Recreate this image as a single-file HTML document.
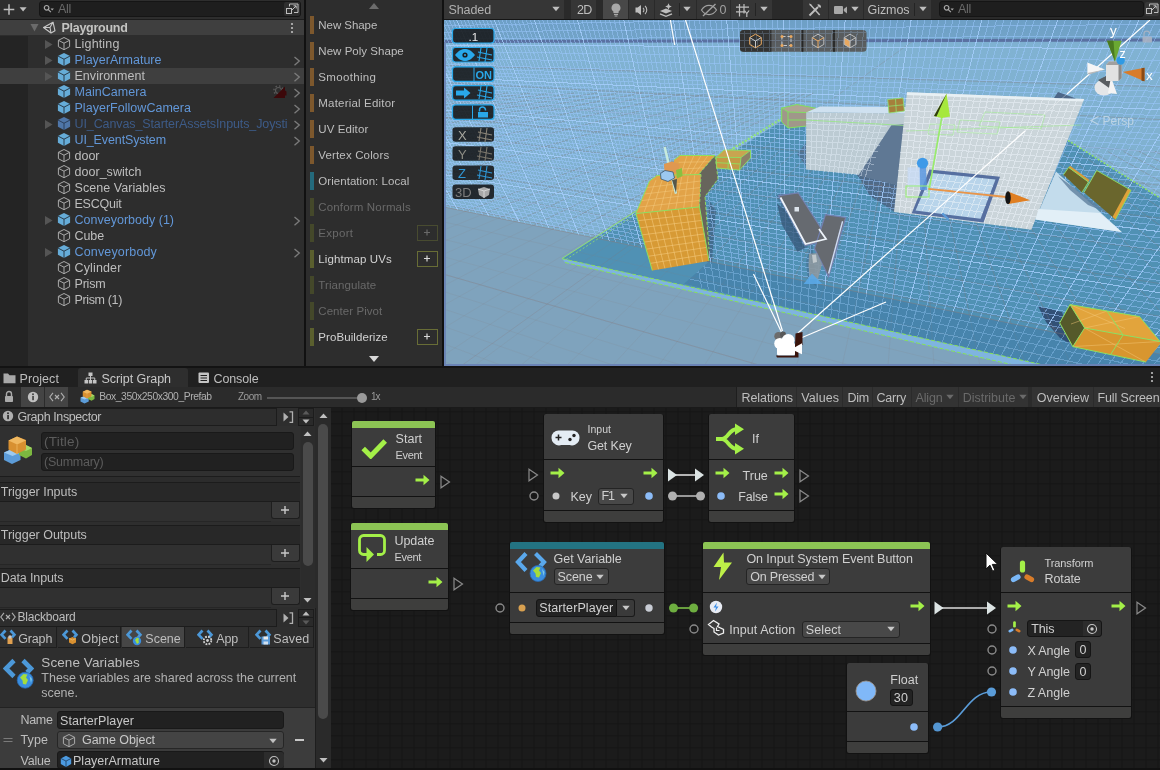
<!DOCTYPE html>
<html lang="en"><head><meta charset="utf-8"><title>Unity Editor - Script Graph</title>
<style>
html,body{margin:0;padding:0;}
body{width:1160px;height:770px;overflow:hidden;background:#111111;position:relative;font-family:"Liberation Sans",sans-serif;}
.a{position:absolute;display:block;box-sizing:border-box;}
.t{white-space:pre;line-height:16px;}
#root{position:absolute;left:0;top:0;width:1160px;height:770px;overflow:hidden;will-change:transform;}
</style></head>
<body>
<div id="root">
<div class="a " style="left:0px;top:0px;width:304px;height:366px;background:#2d2d2d;"></div>
<div class="a " style="left:0px;top:36px;width:28px;height:330px;background:#242424;"></div>
<div class="a " style="left:0px;top:0px;width:304px;height:20px;background:#2e2e2e;border-bottom:1px solid #1c1c1c;"></div>
<svg class="a" style="left:2px;top:2px;" width="26" height="15" viewBox="0 0 26 15"><path d="M7 2.2v10.6M1.7 7.5h10.6" stroke="#bebebe" stroke-width="1.5" fill="none"/><path d="M17.6 5.3h7l-3.5 4.2z" fill="#bebebe"/></svg>
<div class="a " style="left:39px;top:1px;width:262px;height:16px;background:#1e1e1e;border:1px solid #151515;border-radius:3px;"></div>
<svg class="a" style="left:43px;top:4px;" width="12" height="10" viewBox="0 0 12 10"><circle cx="3.6" cy="3.8" r="2.3" stroke="#a8a8a8" stroke-width="1.2" fill="none"/><path d="M5.3 5.6l2.6 2.6" stroke="#a8a8a8" stroke-width="1.2"/><path d="M7.5 4.6h3.4l-1.7 2z" fill="#a8a8a8"/></svg>
<span class="a t" style="left:58px;top:1.44px;font-size:12.5px;color:#6a6a6a;letter-spacing:-0.298px;">All</span>
<div class="a " style="left:284px;top:2px;width:16px;height:14px;background:#2e2e2e;border-radius:2px;"></div>
<svg class="a" style="left:285px;top:2px;" width="15" height="14" viewBox="0 0 15 14"><rect x="1.5" y="6.5" width="5" height="5" fill="none" stroke="#bebebe" stroke-width="1"/><path d="M4.5 4.5v-2.5h8.5v8.5h-4" fill="none" stroke="#bebebe" stroke-width="1"/><path d="M7 8l4-4M8.5 3.8h2.7v2.7" fill="none" stroke="#bebebe" stroke-width="1"/></svg>
<div class="a " style="left:0px;top:20px;width:304px;height:15px;background:#3f3f3f;"></div>
<svg class="a" style="left:30px;top:23px;" width="9" height="9" viewBox="0 0 9 9"><path d="M0.5 1h8l-4 7.5z" fill="#6a6a6a"/></svg>
<svg class="a" style="left:42px;top:20px;" width="15" height="15" viewBox="0 0 15 15"><g fill="none" stroke="#c8c8c8" stroke-width="1.1" stroke-linejoin="round"><path d="M1.5 7.5L11 2.2l2 8.6L9 13z"/><path d="M1.5 7.5h6.5M8 7.5l3-5.3M8 7.5l1 5.5"/></g></svg>
<span class="a t" style="left:61.5px;top:19.84px;font-size:12.5px;color:#c4c4c2;letter-spacing:-0.275px;font-weight:700;">Playground</span>
<svg class="a" style="left:288px;top:22px;" width="8" height="12" viewBox="0 0 8 12"><circle cx="4" cy="2" r="1.1" fill="#bebebe"/><circle cx="4" cy="6" r="1.1" fill="#bebebe"/><circle cx="4" cy="10" r="1.1" fill="#bebebe"/></svg>
<svg class="a" style="left:44px;top:39px;" width="10" height="11" viewBox="0 0 10 11"><path d="M1 1l7.6 4.5L1 10z" fill="#555555"/></svg>
<svg class="a" style="left:57px;top:36px;" width="14" height="16" viewBox="0 0 14 16"><path d="M7 1.5l5.6 2.8v6.4L7 13.7 1.4 10.7V4.3z" fill="none" stroke="#aaaaaa" stroke-width="1" stroke-linejoin="round"/><path d="M1.4 4.3L7 7.2l5.6-2.9M7 7.2v6.5" fill="none" stroke="#aaaaaa" stroke-width="1"/></svg>
<span class="a t" style="left:74.5px;top:35.64px;font-size:12.5px;color:#bebebe;letter-spacing:0.152px;">Lighting</span>
<svg class="a" style="left:44px;top:55px;" width="10" height="11" viewBox="0 0 10 11"><path d="M1 1l7.6 4.5L1 10z" fill="#555555"/></svg>
<svg class="a" style="left:57px;top:52px;" width="14" height="16" viewBox="0 0 14 16"><path d="M7 1l6.1 3v6.7L7 14 0.9 10.7V4z" fill="#66acd8"/><path d="M0.9 4L7 7.2l6.1-3.2M7 7.2v6.8" fill="none" stroke="#22303c" stroke-width="0.9"/></svg>
<span class="a t" style="left:74.5px;top:51.64px;font-size:12.5px;color:#6297d8;letter-spacing:0.012px;">PlayerArmature</span>
<svg class="a" style="left:293px;top:55.5px;" width="8" height="10" viewBox="0 0 8 10"><path d="M1.5 1l4.8 4.1-4.8 4.1" fill="none" stroke="#7c7c7c" stroke-width="1.3"/></svg>
<div class="a " style="left:0px;top:68px;width:304px;height:16px;background:#3f3f3f;"></div>
<svg class="a" style="left:44px;top:71px;" width="10" height="11" viewBox="0 0 10 11"><path d="M1 1l7.6 4.5L1 10z" fill="#555555"/></svg>
<svg class="a" style="left:57px;top:68px;" width="14" height="16" viewBox="0 0 14 16"><path d="M7 1l6.1 3v6.7L7 14 0.9 10.7V4z" fill="#66acd8"/><path d="M0.9 4L7 7.2l6.1-3.2M7 7.2v6.8" fill="none" stroke="#22303c" stroke-width="0.9"/></svg>
<span class="a t" style="left:74.5px;top:67.64px;font-size:12.5px;color:#bebebe;letter-spacing:0.03px;">Environment</span>
<svg class="a" style="left:293px;top:71.5px;" width="8" height="10" viewBox="0 0 8 10"><path d="M1.5 1l4.8 4.1-4.8 4.1" fill="none" stroke="#7c7c7c" stroke-width="1.3"/></svg>
<svg class="a" style="left:57px;top:84px;" width="14" height="16" viewBox="0 0 14 16"><path d="M7 1l6.1 3v6.7L7 14 0.9 10.7V4z" fill="#66acd8"/><path d="M0.9 4L7 7.2l6.1-3.2M7 7.2v6.8" fill="none" stroke="#22303c" stroke-width="0.9"/></svg>
<span class="a t" style="left:74.5px;top:83.64px;font-size:12.5px;color:#6297d8;letter-spacing:0.045px;">MainCamera</span>
<svg class="a" style="left:293px;top:87.5px;" width="8" height="10" viewBox="0 0 8 10"><path d="M1.5 1l4.8 4.1-4.8 4.1" fill="none" stroke="#7c7c7c" stroke-width="1.3"/></svg>
<svg class="a" style="left:57px;top:100px;" width="14" height="16" viewBox="0 0 14 16"><path d="M7 1l6.1 3v6.7L7 14 0.9 10.7V4z" fill="#66acd8"/><path d="M0.9 4L7 7.2l6.1-3.2M7 7.2v6.8" fill="none" stroke="#22303c" stroke-width="0.9"/></svg>
<span class="a t" style="left:74.5px;top:99.64px;font-size:12.5px;color:#6297d8;letter-spacing:0.028px;">PlayerFollowCamera</span>
<svg class="a" style="left:293px;top:103.5px;" width="8" height="10" viewBox="0 0 8 10"><path d="M1.5 1l4.8 4.1-4.8 4.1" fill="none" stroke="#7c7c7c" stroke-width="1.3"/></svg>
<svg class="a" style="left:44px;top:119px;" width="10" height="11" viewBox="0 0 10 11"><path d="M1 1l7.6 4.5L1 10z" fill="#555555"/></svg>
<svg class="a" style="left:57px;top:116px;" width="14" height="16" viewBox="0 0 14 16"><path d="M7 1l6.1 3v6.7L7 14 0.9 10.7V4z" fill="#4f76a8"/><path d="M0.9 4L7 7.2l6.1-3.2M7 7.2v6.8" fill="none" stroke="#283a52" stroke-width="0.9"/></svg>
<span class="a t" style="left:74.5px;top:115.64px;font-size:12.5px;color:#3d5b88;letter-spacing:-0.104px;">UI_Canvas_StarterAssetsInputs_Joysti</span>
<svg class="a" style="left:293px;top:119.5px;" width="8" height="10" viewBox="0 0 8 10"><path d="M1.5 1l4.8 4.1-4.8 4.1" fill="none" stroke="#7c7c7c" stroke-width="1.3"/></svg>
<svg class="a" style="left:57px;top:132px;" width="14" height="16" viewBox="0 0 14 16"><path d="M7 1l6.1 3v6.7L7 14 0.9 10.7V4z" fill="#66acd8"/><path d="M0.9 4L7 7.2l6.1-3.2M7 7.2v6.8" fill="none" stroke="#22303c" stroke-width="0.9"/></svg>
<span class="a t" style="left:74.5px;top:131.64px;font-size:12.5px;color:#6297d8;letter-spacing:-0.113px;">UI_EventSystem</span>
<svg class="a" style="left:293px;top:135.5px;" width="8" height="10" viewBox="0 0 8 10"><path d="M1.5 1l4.8 4.1-4.8 4.1" fill="none" stroke="#7c7c7c" stroke-width="1.3"/></svg>
<svg class="a" style="left:57px;top:148px;" width="14" height="16" viewBox="0 0 14 16"><path d="M7 1.5l5.6 2.8v6.4L7 13.7 1.4 10.7V4.3z" fill="none" stroke="#aaaaaa" stroke-width="1" stroke-linejoin="round"/><path d="M1.4 4.3L7 7.2l5.6-2.9M7 7.2v6.5" fill="none" stroke="#aaaaaa" stroke-width="1"/></svg>
<span class="a t" style="left:74.5px;top:147.64px;font-size:12.5px;color:#bebebe;">door</span>
<svg class="a" style="left:57px;top:164px;" width="14" height="16" viewBox="0 0 14 16"><path d="M7 1.5l5.6 2.8v6.4L7 13.7 1.4 10.7V4.3z" fill="none" stroke="#aaaaaa" stroke-width="1" stroke-linejoin="round"/><path d="M1.4 4.3L7 7.2l5.6-2.9M7 7.2v6.5" fill="none" stroke="#aaaaaa" stroke-width="1"/></svg>
<span class="a t" style="left:74.5px;top:163.64px;font-size:12.5px;color:#bebebe;letter-spacing:0.028px;">door_switch</span>
<svg class="a" style="left:57px;top:180px;" width="14" height="16" viewBox="0 0 14 16"><path d="M7 1.5l5.6 2.8v6.4L7 13.7 1.4 10.7V4.3z" fill="none" stroke="#aaaaaa" stroke-width="1" stroke-linejoin="round"/><path d="M1.4 4.3L7 7.2l5.6-2.9M7 7.2v6.5" fill="none" stroke="#aaaaaa" stroke-width="1"/></svg>
<span class="a t" style="left:74.5px;top:179.64px;font-size:12.5px;color:#bebebe;letter-spacing:0.06px;">Scene Variables</span>
<svg class="a" style="left:57px;top:196px;" width="14" height="16" viewBox="0 0 14 16"><path d="M7 1.5l5.6 2.8v6.4L7 13.7 1.4 10.7V4.3z" fill="none" stroke="#aaaaaa" stroke-width="1" stroke-linejoin="round"/><path d="M1.4 4.3L7 7.2l5.6-2.9M7 7.2v6.5" fill="none" stroke="#aaaaaa" stroke-width="1"/></svg>
<span class="a t" style="left:74.5px;top:195.64px;font-size:12.5px;color:#bebebe;letter-spacing:-0.232px;">ESCQuit</span>
<svg class="a" style="left:44px;top:215px;" width="10" height="11" viewBox="0 0 10 11"><path d="M1 1l7.6 4.5L1 10z" fill="#555555"/></svg>
<svg class="a" style="left:57px;top:212px;" width="14" height="16" viewBox="0 0 14 16"><path d="M7 1l6.1 3v6.7L7 14 0.9 10.7V4z" fill="#66acd8"/><path d="M0.9 4L7 7.2l6.1-3.2M7 7.2v6.8" fill="none" stroke="#22303c" stroke-width="0.9"/></svg>
<span class="a t" style="left:74.5px;top:211.64px;font-size:12.5px;color:#6297d8;letter-spacing:0.01px;">Conveyorbody (1)</span>
<svg class="a" style="left:293px;top:215.5px;" width="8" height="10" viewBox="0 0 8 10"><path d="M1.5 1l4.8 4.1-4.8 4.1" fill="none" stroke="#7c7c7c" stroke-width="1.3"/></svg>
<svg class="a" style="left:57px;top:228px;" width="14" height="16" viewBox="0 0 14 16"><path d="M7 1.5l5.6 2.8v6.4L7 13.7 1.4 10.7V4.3z" fill="none" stroke="#aaaaaa" stroke-width="1" stroke-linejoin="round"/><path d="M1.4 4.3L7 7.2l5.6-2.9M7 7.2v6.5" fill="none" stroke="#aaaaaa" stroke-width="1"/></svg>
<span class="a t" style="left:74.5px;top:227.64px;font-size:12.5px;color:#bebebe;letter-spacing:-0.095px;">Cube</span>
<svg class="a" style="left:44px;top:247px;" width="10" height="11" viewBox="0 0 10 11"><path d="M1 1l7.6 4.5L1 10z" fill="#555555"/></svg>
<svg class="a" style="left:57px;top:244px;" width="14" height="16" viewBox="0 0 14 16"><path d="M7 1l6.1 3v6.7L7 14 0.9 10.7V4z" fill="#66acd8"/><path d="M0.9 4L7 7.2l6.1-3.2M7 7.2v6.8" fill="none" stroke="#22303c" stroke-width="0.9"/></svg>
<span class="a t" style="left:74.5px;top:243.64px;font-size:12.5px;color:#6297d8;letter-spacing:0.159px;">Conveyorbody</span>
<svg class="a" style="left:293px;top:247.5px;" width="8" height="10" viewBox="0 0 8 10"><path d="M1.5 1l4.8 4.1-4.8 4.1" fill="none" stroke="#7c7c7c" stroke-width="1.3"/></svg>
<svg class="a" style="left:57px;top:260px;" width="14" height="16" viewBox="0 0 14 16"><path d="M7 1.5l5.6 2.8v6.4L7 13.7 1.4 10.7V4.3z" fill="none" stroke="#aaaaaa" stroke-width="1" stroke-linejoin="round"/><path d="M1.4 4.3L7 7.2l5.6-2.9M7 7.2v6.5" fill="none" stroke="#aaaaaa" stroke-width="1"/></svg>
<span class="a t" style="left:74.5px;top:259.64px;font-size:12.5px;color:#bebebe;letter-spacing:0.144px;">Cylinder</span>
<svg class="a" style="left:57px;top:276px;" width="14" height="16" viewBox="0 0 14 16"><path d="M7 1.5l5.6 2.8v6.4L7 13.7 1.4 10.7V4.3z" fill="none" stroke="#aaaaaa" stroke-width="1" stroke-linejoin="round"/><path d="M1.4 4.3L7 7.2l5.6-2.9M7 7.2v6.5" fill="none" stroke="#aaaaaa" stroke-width="1"/></svg>
<span class="a t" style="left:74.5px;top:275.64px;font-size:12.5px;color:#bebebe;letter-spacing:-0.188px;">Prism</span>
<svg class="a" style="left:57px;top:292px;" width="14" height="16" viewBox="0 0 14 16"><path d="M7 1.5l5.6 2.8v6.4L7 13.7 1.4 10.7V4.3z" fill="none" stroke="#aaaaaa" stroke-width="1" stroke-linejoin="round"/><path d="M1.4 4.3L7 7.2l5.6-2.9M7 7.2v6.5" fill="none" stroke="#aaaaaa" stroke-width="1"/></svg>
<span class="a t" style="left:74.5px;top:291.64px;font-size:12.5px;color:#bebebe;letter-spacing:-0.354px;">Prism (1)</span>
<svg class="a" style="left:272px;top:84px;" width="17" height="16" viewBox="0 0 17 16"><circle cx="6.5" cy="6.5" r="3" fill="none" stroke="#5a5a5a" stroke-width="1.1"/><circle cx="6.5" cy="6.5" r="4.6" fill="none" stroke="#5a5a5a" stroke-width="1.4" stroke-dasharray="1.5 2.1"/><path d="M13 2.5v4l1.5 1v4h-1.5v2.5h-11.5z" fill="#3c080a"/></svg>
<div class="a " style="left:304px;top:0px;width:2px;height:366px;background:#111111;"></div>
<div class="a " style="left:306px;top:0px;width:136px;height:366px;background:#2d2d2d;"></div>
<svg class="a" style="left:369px;top:2px;" width="10" height="8" viewBox="0 0 10 8"><path d="M5 1l5 6H0z" fill="#6c6c6c"/></svg>
<svg class="a" style="left:369px;top:355px;" width="10" height="8" viewBox="0 0 10 8"><path d="M5 7L0 1h10z" fill="#d8d8d8"/></svg>
<div class="a " style="left:310px;top:16px;width:4px;height:18px;background:#7d582d;"></div>
<span class="a t" style="left:318.3px;top:17.33px;font-size:11.5px;color:#bebebe;letter-spacing:-0.05px;">New Shape</span>
<div class="a " style="left:310px;top:42px;width:4px;height:18px;background:#7d582d;"></div>
<span class="a t" style="left:318.3px;top:43.33px;font-size:11.5px;color:#bebebe;letter-spacing:0.034px;">New Poly Shape</span>
<div class="a " style="left:310px;top:68px;width:4px;height:18px;background:#7d582d;"></div>
<span class="a t" style="left:318.3px;top:69.33px;font-size:11.5px;color:#bebebe;letter-spacing:0.336px;">Smoothing</span>
<div class="a " style="left:310px;top:94px;width:4px;height:18px;background:#7d582d;"></div>
<span class="a t" style="left:318.3px;top:95.33px;font-size:11.5px;color:#bebebe;letter-spacing:0.191px;">Material Editor</span>
<div class="a " style="left:310px;top:120px;width:4px;height:18px;background:#7d582d;"></div>
<span class="a t" style="left:318.3px;top:121.33px;font-size:11.5px;color:#bebebe;letter-spacing:0.088px;">UV Editor</span>
<div class="a " style="left:310px;top:146px;width:4px;height:18px;background:#7d582d;"></div>
<span class="a t" style="left:318.3px;top:147.33px;font-size:11.5px;color:#bebebe;letter-spacing:0.152px;">Vertex Colors</span>
<div class="a " style="left:310px;top:172px;width:4px;height:18px;background:#246a7c;"></div>
<span class="a t" style="left:318.3px;top:173.33px;font-size:11.5px;color:#bebebe;letter-spacing:0.048px;">Orientation: Local</span>
<div class="a " style="left:310px;top:198px;width:4px;height:18px;background:#44482a;"></div>
<span class="a t" style="left:318.3px;top:199.33px;font-size:11.5px;color:#696969;letter-spacing:0.16px;">Conform Normals</span>
<div class="a " style="left:310px;top:224px;width:4px;height:18px;background:#44482a;"></div>
<span class="a t" style="left:318.3px;top:225.33px;font-size:11.5px;color:#696969;letter-spacing:0.294px;">Export</span>
<div class="a " style="left:417px;top:225px;width:20.5px;height:15.5px;background:transparent;border:1px solid #484b30;"></div>
<svg class="a" style="left:417px;top:225px;" width="20" height="15" viewBox="0 0 20 15"><path d="M10 4.5v6M7 7.5h6" stroke="#696969" stroke-width="1.2"/></svg>
<div class="a " style="left:310px;top:250px;width:4px;height:18px;background:#5a5f2e;"></div>
<span class="a t" style="left:318.3px;top:251.33px;font-size:11.5px;color:#d2d2d2;letter-spacing:0.106px;">Lightmap UVs</span>
<div class="a " style="left:417px;top:251px;width:20.5px;height:15.5px;background:transparent;border:1px solid #686d36;"></div>
<svg class="a" style="left:417px;top:251px;" width="20" height="15" viewBox="0 0 20 15"><path d="M10 4.5v6M7 7.5h6" stroke="#d8d8d8" stroke-width="1.2"/></svg>
<div class="a " style="left:310px;top:276px;width:4px;height:18px;background:#44482a;"></div>
<span class="a t" style="left:318.3px;top:277.33px;font-size:11.5px;color:#696969;letter-spacing:0.082px;">Triangulate</span>
<div class="a " style="left:310px;top:302px;width:4px;height:18px;background:#44482a;"></div>
<span class="a t" style="left:318.3px;top:303.33px;font-size:11.5px;color:#696969;letter-spacing:0.06px;">Center Pivot</span>
<div class="a " style="left:310px;top:328px;width:4px;height:18px;background:#5a5f2e;"></div>
<span class="a t" style="left:318.3px;top:329.33px;font-size:11.5px;color:#d2d2d2;letter-spacing:0.085px;">ProBuilderize</span>
<div class="a " style="left:417px;top:329px;width:20.5px;height:15.5px;background:transparent;border:1px solid #686d36;"></div>
<svg class="a" style="left:417px;top:329px;" width="20" height="15" viewBox="0 0 20 15"><path d="M10 4.5v6M7 7.5h6" stroke="#d8d8d8" stroke-width="1.2"/></svg>
<div class="a " style="left:442px;top:0px;width:2px;height:366px;background:#111111;"></div>
<div class="a " style="left:444px;top:0px;width:716px;height:20px;background:#2a2a2a;border-bottom:1px solid #161616;"></div>
<div class="a " style="left:444px;top:0px;width:120px;height:19px;background:#363636;"></div>
<span class="a t" style="left:448.5px;top:1.74px;font-size:12.5px;color:#b0b0b0;letter-spacing:-0.099px;">Shaded</span>
<svg class="a" style="left:552px;top:6px;" width="8" height="6" viewBox="0 0 8 6"><path d="M0.3 0.8h7.4L4 5.2z" fill="#bebebe"/></svg>
<div class="a " style="left:571px;top:0px;width:25px;height:19px;background:#363636;"></div>
<span class="a t" style="left:577px;top:1.74px;font-size:12.5px;color:#bebebe;letter-spacing:-0.739px;">2D</span>
<div class="a " style="left:603px;top:0px;width:25px;height:19px;background:#484848;"></div>
<svg class="a" style="left:609px;top:2px;" width="14" height="16" viewBox="0 0 14 16"><path d="M7 1.5a4.4 4.4 0 0 1 2.6 8v1.6H4.4V9.5A4.4 4.4 0 0 1 7 1.5z" fill="#a8a8a8"/><rect x="5" y="11.8" width="4" height="1.2" fill="#a8a8a8"/><rect x="5.6" y="13.5" width="2.8" height="1" fill="#a8a8a8"/></svg>
<div class="a " style="left:629px;top:0px;width:25px;height:19px;background:#363636;"></div>
<svg class="a" style="left:634px;top:3px;" width="16" height="14" viewBox="0 0 16 14"><path d="M1.5 4.5h2.2L7 2v10L3.7 9.5H1.5z" fill="#bebebe"/><path d="M9 4.8a3 3 0 0 1 0 4.4M11 3a5.4 5.4 0 0 1 0 8" fill="none" stroke="#bebebe" stroke-width="1.1"/></svg>
<div class="a " style="left:655px;top:0px;width:41px;height:19px;background:#363636;"></div>
<svg class="a" style="left:658px;top:2px;" width="20" height="16" viewBox="0 0 20 16"><path d="M2 9l6-2.6L14 9l-6 2.6z" fill="#bebebe"/><path d="M2 11.8l6 2.6 6-2.6" fill="none" stroke="#bebebe" stroke-width="1.3"/><path d="M10.5 1.2l1 2.3 2.3 1-2.3 1-1 2.3-1-2.3-2.3-1 2.3-1z" fill="#bebebe"/></svg>
<div class="a " style="left:679px;top:3px;width:1px;height:13px;background:#242424;"></div>
<svg class="a" style="left:683px;top:6px;" width="9" height="6" viewBox="0 0 9 6"><path d="M0.3 0.8h7.4L4 5.2z" fill="#bebebe"/></svg>
<div class="a " style="left:697px;top:0px;width:33px;height:19px;background:#363636;"></div>
<svg class="a" style="left:700px;top:2px;" width="20" height="16" viewBox="0 0 20 16"><path d="M1.5 8c2.2-3.4 5-4.6 7.5-4.6S14.3 4.6 16.5 8c-2.2 3.4-5 4.6-7.5 4.6S3.7 11.4 1.5 8z" fill="none" stroke="#a0a0a0" stroke-width="1.2"/><path d="M3 14L15.5 2" stroke="#a0a0a0" stroke-width="1.4"/></svg>
<span class="a t" style="left:719.5px;top:1.74px;font-size:12.5px;color:#a0a0a0;">0</span>
<div class="a " style="left:731px;top:0px;width:41px;height:19px;background:#363636;"></div>
<svg class="a" style="left:734px;top:2px;" width="20" height="16" viewBox="0 0 20 16"><path d="M2 5.2h13M2 9.8h9M5.5 2v12.5M10 2v9.5" stroke="#bebebe" stroke-width="1.2" fill="none"/><path d="M10.5 8.5l2.3 3 2.3-3M12.8 11.5v3.5" stroke="#bebebe" stroke-width="1.2" fill="none"/></svg>
<div class="a " style="left:755px;top:3px;width:1px;height:13px;background:#242424;"></div>
<svg class="a" style="left:759.5px;top:6px;" width="9" height="6" viewBox="0 0 9 6"><path d="M0.3 0.8h7.4L4 5.2z" fill="#bebebe"/></svg>
<div class="a " style="left:803px;top:0px;width:25px;height:19px;background:#363636;"></div>
<svg class="a" style="left:807px;top:2px;" width="17" height="16" viewBox="0 0 17 16"><path d="M2.5 13.5l8.5-8.5" stroke="#bebebe" stroke-width="2"/><path d="M10.5 2.2a3 3 0 0 1 3.5 3.5l-2-0.5-1-1z" fill="#bebebe"/><path d="M3.2 2.5l9.5 10.5" stroke="#bebebe" stroke-width="1.5"/><path d="M2 1.5l2.5 0.7-1.5 1.6z" fill="#bebebe"/></svg>
<div class="a " style="left:829px;top:0px;width:34px;height:19px;background:#363636;"></div>
<svg class="a" style="left:833px;top:4px;" width="16" height="12" viewBox="0 0 16 12"><rect x="1" y="2" width="9" height="8" rx="1" fill="#a8a8a8"/><path d="M10.8 5l3.2-2.4v6.8L10.8 7z" fill="#a8a8a8"/></svg>
<svg class="a" style="left:851px;top:6px;" width="9" height="6" viewBox="0 0 9 6"><path d="M0.3 0.8h7.4L4 5.2z" fill="#bebebe"/></svg>
<div class="a " style="left:864px;top:0px;width:67px;height:19px;background:#363636;"></div>
<span class="a t" style="left:867.5px;top:1.74px;font-size:12.5px;color:#bebebe;letter-spacing:-0.061px;">Gizmos</span>
<div class="a " style="left:914px;top:3px;width:1px;height:13px;background:#242424;"></div>
<svg class="a" style="left:919px;top:6px;" width="9" height="6" viewBox="0 0 9 6"><path d="M0.3 0.8h7.4L4 5.2z" fill="#bebebe"/></svg>
<div class="a " style="left:939px;top:1px;width:205px;height:16px;background:#1e1e1e;border:1px solid #151515;border-radius:3px;"></div>
<svg class="a" style="left:943px;top:4px;" width="12" height="10" viewBox="0 0 12 10"><circle cx="3.6" cy="3.8" r="2.3" stroke="#a8a8a8" stroke-width="1.2" fill="none"/><path d="M5.3 5.6l2.6 2.6" stroke="#a8a8a8" stroke-width="1.2"/><path d="M7.5 4.6h3.4l-1.7 2z" fill="#a8a8a8"/></svg>
<span class="a t" style="left:958px;top:1.44px;font-size:12.5px;color:#6a6a6a;letter-spacing:-0.298px;">All</span>
<div class="a " style="left:1145px;top:2px;width:14px;height:14px;background:#383838;border-radius:2px;"></div>
<svg class="a" style="left:1145px;top:2px;" width="15" height="14" viewBox="0 0 15 14"><rect x="1.5" y="6.5" width="5" height="5" fill="none" stroke="#bebebe" stroke-width="1"/><path d="M4.5 4.5v-2.5h8.5v8.5h-4" fill="none" stroke="#bebebe" stroke-width="1"/><path d="M7 8l4-4M8.5 3.8h2.7v2.7" fill="none" stroke="#bebebe" stroke-width="1"/></svg>
<svg class="a" style="left:444px;top:20px;" width="716" height="346" viewBox="444 20 716 346"><defs><linearGradient id="sky" x1="0" y1="0" x2="0" y2="1"><stop offset="0" stop-color="#76a8ce"/><stop offset="0.08" stop-color="#80b2d2"/><stop offset="1" stop-color="#80b0cc"/></linearGradient><clipPath id="gp2"><polygon points="709,261.4 1160,354 1160,366 1048,366 684,283.8"/></clipPath></defs><rect x="444" y="20" width="716" height="346" fill="url(#sky)"/><polygon points="444,207 1160,354 1160,366 444,366" fill="#7fa3bd"/><polygon points="562,258.6 782,121 1068,140.4 1160,198 1160,366 1048,366" fill="#5091b4"/><polygon points="709,261.4 1160,354 1160,366 1048,366 684,283.8" fill="#4784ac"/><polygon points="806,143 797,154 806,166" fill="#4f7596"/><polygon points="884.7,121 906,119 894.5,212 856.6,174.7" fill="#4f6a88"/><polygon points="856,172 894.5,212 870,196" fill="#4a6a8a"/><polygon points="1038,306 1062,312 1074,346 1060,338 1046,322" fill="#2f4a70" opacity="0.9"/><polygon points="709,200 716,210 712,262 707,262" fill="#3f6486" opacity="0.8"/><polygon points="776,196 782,192 808,247 803,250" fill="#3f6486" opacity="0.55"/><polygon points="806,262 812,240 816,286 808,280" fill="#3f6486" opacity="0.5"/><defs><clipPath id="sc"><rect x="444" y="20" width="716" height="346"/></clipPath></defs><defs><clipPath id="ab"><polygon points="444,20 1160,20 1160,354 444,207"/></clipPath></defs><g clip-path="url(#ab)"><path d="M350.9 93L-2600 366M373.3 93L-2460 366M395.7 93L-2320 366M418.1 93L-2180 366M440.5 93L-2040 366M462.9 93L-1900 366M485.3 93L-1760 366M507.7 93L-1620 366M530.1 93L-1480 366M552.5 93L-1340 366M574.9 93L-1200 366M597.3 93L-1060 366M619.7 93L-920 366M642.1 93L-780 366M664.5 93L-640 366M686.9 93L-500 366M709.3 93L-360 366M731.7 93L-220 366M754.1 93L-80 366M776.5 93L60 366M783.9 93L106 366M791.2 93L152 366M798.6 93L198 366M806 93L244 366M813.3 93L290 366M716.8 151.5L336 366M732.5 151.5L382 366M748.1 151.5L428 366M763.7 151.5L474 366M779.4 151.5L520 366M795 151.5L566 366M810.7 151.5L612 366M826.3 151.5L658 366M841.9 151.5L704 366M857.6 151.5L750 366M873.2 151.5L796 366M888.9 151.5L842 366M904.5 151.5L888 366M920.1 151.5L934 366M935.8 151.5L980 366M951.4 151.5L1026 366M967.1 151.5L1072 366M982.7 151.5L1118 366M998.3 151.5L1164 366M1014 151.5L1210 366M1029.6 151.5L1256 366M1045.3 151.5L1302 366M1060.9 151.5L1348 366M1076.5 151.5L1394 366M1092.2 151.5L1440 366M1107.8 151.5L1486 366M1123.5 151.5L1532 366M1139.1 151.5L1578 366M1154.7 151.5L1624 366M1170.4 151.5L1670 366M1186 151.5L1716 366M1201.7 151.5L1762 366M1217.3 151.5L1808 366M1232.9 151.5L1854 366M444 65.3L1160 86.8M444 82.7L1160 119.6M444 100.1L1160 152.4M444 117.5L1160 185.2M444 135L1160 218M444 152.4L1160 250.8M444 169.8L1160 283.6M444 187.2L1160 316.4M444 204.6L1160 349.3M444 222L1160 382.1M444 239.4L1160 414.9M444 256.9L1160 447.7M444 274.3L1160 480.5M444 291.7L1160 513.3M444 309.1L1160 546.1M444 326.5L1160 578.9M444 343.9L1160 611.7M444 361.4L1160 644.5M444 378.8L1160 677.3M444 396.2L1160 710.2M444 413.6L1160 743M444 431L1160 775.8M444 448.4L1160 808.6M444 465.8L1160 841.4M444 483.3L1160 874.2" fill="none" stroke="#84706c" stroke-width="1" opacity="0.2"/></g><g clip-path="url(#sc)"><path d="M350.9 93L-2600 366M373.3 93L-2460 366M395.7 93L-2320 366M418.1 93L-2180 366M440.5 93L-2040 366M462.9 93L-1900 366M485.3 93L-1760 366M507.7 93L-1620 366M530.1 93L-1480 366M552.5 93L-1340 366M574.9 93L-1200 366M597.3 93L-1060 366M619.7 93L-920 366M642.1 93L-780 366M664.5 93L-640 366M686.9 93L-500 366M709.3 93L-360 366M731.7 93L-220 366M754.1 93L-80 366M776.5 93L60 366M783.9 93L106 366M791.2 93L152 366M798.6 93L198 366M806 93L244 366M813.3 93L290 366M716.8 151.5L336 366M732.5 151.5L382 366M748.1 151.5L428 366M763.7 151.5L474 366M779.4 151.5L520 366M795 151.5L566 366M810.7 151.5L612 366M826.3 151.5L658 366M841.9 151.5L704 366M857.6 151.5L750 366M873.2 151.5L796 366M888.9 151.5L842 366M904.5 151.5L888 366M920.1 151.5L934 366M935.8 151.5L980 366M951.4 151.5L1026 366M967.1 151.5L1072 366M982.7 151.5L1118 366M998.3 151.5L1164 366M1014 151.5L1210 366M1029.6 151.5L1256 366M1045.3 151.5L1302 366M1060.9 151.5L1348 366M1076.5 151.5L1394 366M1092.2 151.5L1440 366M1107.8 151.5L1486 366M1123.5 151.5L1532 366M1139.1 151.5L1578 366M1154.7 151.5L1624 366M1170.4 151.5L1670 366M1186 151.5L1716 366M1201.7 151.5L1762 366M1217.3 151.5L1808 366M1232.9 151.5L1854 366M444 65.3L1160 86.8M444 82.7L1160 119.6M444 100.1L1160 152.4M444 117.5L1160 185.2M444 135L1160 218M444 152.4L1160 250.8M444 169.8L1160 283.6M444 187.2L1160 316.4M444 204.6L1160 349.3M444 222L1160 382.1M444 239.4L1160 414.9M444 256.9L1160 447.7M444 274.3L1160 480.5M444 291.7L1160 513.3M444 309.1L1160 546.1M444 326.5L1160 578.9M444 343.9L1160 611.7M444 361.4L1160 644.5M444 378.8L1160 677.3M444 396.2L1160 710.2M444 413.6L1160 743M444 431L1160 775.8M444 448.4L1160 808.6M444 465.8L1160 841.4M444 483.3L1160 874.2" fill="none" stroke="#8a7c7c" stroke-width="1" opacity="0.14"/><path d="M913 41L461 366M444 274.3 L1160 480.5" fill="none" stroke="#8a7470" stroke-width="1" opacity="0.22"/></g><polygon points="444,20 1160,20 1160,39 444,40.5" fill="#5f90b8" opacity="0.35"/><polygon points="444,40 1160,38.6 1160,41.6 444,43" fill="#566a9c" opacity="0.9"/><path d="M444 205.3L445.2 207.2M444 196L451.5 208.5M444 176.5L464.1 211.1M444 166.3L470.4 212.4M444 155.7L476.6 213.7M444 144.7L482.8 214.9M444 121.5L495.1 217.5M444 109.2L501.2 218.7M444 96.4L507.3 220M444 83.2L513.3 221.2M444 55.1L525.4 223.7M444 40.2L531.3 224.9M444 24.6L537.3 226.1M449.3 20L543.2 227.3M464.1 20L555 229.7M471.5 20L560.8 230.9M479 20L566.7 232.1M486.6 20L572.6 233.4M502.1 20L584.6 235.8M510 20L590.7 237.1M518 20L596.9 238.3M526.2 20L603.1 239.6M542.8 20L615.7 242.2M551.3 20L622.1 243.5M559.9 20L628.6 244.8M568.6 20L635.1 246.2M586.5 20L648.3 248.9M595.6 20L655 250.3M604.9 20L661.7 251.6M614.2 20L668.5 253M633.4 20L682.3 255.9M643.2 20L689.3 257.3M653.1 20L696.4 258.7M663.2 20L703.5 260.2M683.7 20L717.9 263.1M694.2 20L725.1 264.6M704.9 20L732.5 266.1M715.7 20L739.9 267.7M737.8 20L754.9 270.7M749 20L762.5 272.3M760.5 20L770.1 273.9M772.1 20L777.8 275.4M795.8 20L793.4 278.6M807.9 20L801.3 280.2M820.1 20L809.3 281.9M832.6 20L817.3 283.5M858 20L833.5 286.8M871 20L841.6 288.5M884.2 20L849.9 290.2M897.5 20L858.2 291.9M924.8 20L875 295.3M938.8 20L883.4 297.1M952.9 20L892 298.8M967.2 20L900.6 300.6M996.5 20L917.9 304.1M1011.5 20L926.7 305.9M1026.7 20L935.5 307.8M1042.1 20L944.3 309.6M1073.5 20L962.3 313.2M1089.5 20L971.3 315.1M1105.8 20L980.4 317M1122.4 20L989.5 318.8M1156.1 20L1008 322.6M1160 46L1017.3 324.5M1160 77.5L1026.6 326.4M1160 106.8L1036 328.4M1160 159.5L1055 332.3M1160 183.3L1064.6 334.2M1160 205.6L1074.2 336.2M1160 226.6L1083.8 338.2M1160 264.9L1103.3 342.2M1160 282.5L1113.1 344.2M1160 299.1L1122.9 346.2M1160 314.9L1132.8 348.2M1160 343.9L1152.7 352.3M444 203.8L1160 347.7M444 200.6L1160 341.6M444 197.3L1160 335.5M444 194.1L1160 329.4M444 190.8L1160 323.3M444 187.6L1160 317.2M444 184.4L1160 311.1M444 181.1L1160 305M444 177.9L1160 298.9M444 171.4L1160 286.7M444 168.2L1160 280.6M444 164.9L1160 274.5M444 161.7L1160 268.4M444 158.4L1160 262.3M444 155.2L1160 256.2M444 152L1160 250.1M444 148.7L1160 244M444 145.5L1160 237.9M444 139L1160 225.6M444 135.8L1160 219.5M444 132.5L1160 213.4M444 129.3L1160 207.3M444 126L1160 201.2M444 122.8L1160 195.1M444 119.6L1160 189M444 116.3L1160 182.9M444 113.1L1160 176.8M444 106.6L1160 164.6M444 103.4L1160 158.5M444 100.1L1160 152.4M444 96.9L1160 146.3M444 93.6L1160 140.2M444 90.4L1160 134.1M444 87.2L1160 128M444 83.9L1160 121.9M444 80.7L1160 115.8M444 74.2L1160 103.6M444 71L1160 97.5M444 67.7L1160 91.4M444 64.5L1160 85.3M444 58L1160 73M444 51.5L1160 60.8M444 38.6L1160 36.4M444 32.1L1160 24.2M444 25.6L739.3 20" fill="none" stroke="#9cc8ff" stroke-width="1" opacity="0.5" shape-rendering="crispEdges"/><defs><linearGradient id="lodg" gradientUnits="userSpaceOnUse" x1="0" y1="150" x2="0" y2="235"><stop offset="0" stop-color="#fff"/><stop offset="1" stop-color="#000"/></linearGradient><mask id="lod" maskUnits="userSpaceOnUse" x="444" y="20" width="716" height="346"><rect x="444" y="20" width="716" height="346" fill="url(#lodg)"/></mask></defs><g mask="url(#lod)"><path d="M444 200.7L448.3 207.9M444 191.3L454.7 209.2M444 181.5L461 210.5M444 171.5L467.2 211.8M444 161L473.5 213M444 150.2L479.7 214.3M444 139L485.9 215.6M444 127.4L492 216.8M444 115.4L498.1 218.1M444 102.9L504.2 219.3M444 89.9L510.3 220.6M444 76.4L516.3 221.8M444 62.3L522.4 223.1M444 47.7L528.3 224.3M444 32.4L534.3 225.5M445.6 20L540.2 226.7M453 20L546.2 227.9M460.4 20L552 229.1M467.8 20L557.9 230.3M475.2 20L563.7 231.5M482.8 20L569.6 232.8M490.4 20L575.6 234M498.2 20L581.6 235.2M506 20L587.7 236.5M514 20L593.8 237.7M522.1 20L600 239M530.3 20L606.3 240.3M538.6 20L612.6 241.6M547 20L618.9 242.9M555.6 20L625.3 244.2M564.3 20L631.8 245.5M573.1 20L638.4 246.8M582 20L645 248.2M591 20L651.6 249.6M600.2 20L658.3 250.9M609.5 20L665.1 252.3M619 20L672 253.7M628.6 20L678.9 255.1M638.3 20L685.8 256.6M648.1 20L692.8 258M658.1 20L699.9 259.5M668.3 20L707 260.9M678.5 20L714.2 262.4M689 20L721.5 263.9M699.5 20L728.8 265.4M710.3 20L736.2 266.9M721.2 20L743.6 268.4M732.2 20L751.1 270M743.4 20L758.7 271.5M754.7 20L766.3 273.1M766.3 20L774 274.6M777.9 20L781.7 276.2M789.8 20L789.5 277.8M801.8 20L797.4 279.4M814 20L805.3 281.1M826.3 20L813.3 282.7M838.9 20L821.3 284.3M851.6 20L829.4 286M864.5 20L837.5 287.7M877.6 20L845.8 289.4M890.8 20L854 291.1M904.3 20L862.4 292.8M917.9 20L870.7 294.5M931.8 20L879.2 296.2M945.8 20L887.7 298M960 20L896.3 299.7M974.5 20L904.9 301.5M989.1 20L913.5 303.3M1004 20L922.3 305M1019 20L931.1 306.8M1034.3 20L939.9 308.7M1049.8 20L948.8 310.5M1065.5 20L957.8 312.3M1081.5 20L966.8 314.2M1097.7 20L975.8 316M1114.1 20L985 317.9M1130.7 20L994.1 319.8M1147.6 20L1003.3 321.7M1160 29.4L1012.6 323.6M1160 62.1L1022 325.5M1160 92.4L1031.3 327.4M1160 120.6L1040.8 329.3M1160 147L1050.2 331.3M1160 171.6L1059.8 333.2M1160 194.6L1069.4 335.2M1160 216.3L1079 337.2M1160 236.6L1088.7 339.2M1160 255.8L1098.4 341.2M1160 273.9L1108.2 343.2M1160 290.9L1118 345.2M1160 307.1L1127.9 347.2M1160 322.4L1137.8 349.2M1160 336.9L1147.7 351.3M1160 350.7L1157.7 353.3" fill="none" stroke="#9cc8ff" stroke-width="1" opacity="0.5" shape-rendering="crispEdges"/></g><path d="M444 186.5L457.8 209.8M444 133.3L488.9 216.2M444 69.4L519.4 222.4M456.7 20L549.1 228.5M494.3 20L578.6 234.6M534.4 20L609.4 240.9M577.5 20L641.7 247.5M623.7 20L675.4 254.4M673.4 20L710.6 261.7M726.7 20L747.4 269.2M783.8 20L785.6 277M845.2 20L825.3 285.2M911.1 20L866.5 293.6M981.8 20L909.2 302.4M1057.7 20L953.3 311.4M1139.1 20L998.7 320.7M1160 134L1045.5 330.3M1160 246.3L1093.5 340.2M1160 329.8L1142.7 350.2M444 174.6L1160 292.8M444 142.2L1160 231.7M444 109.8L1160 170.7M444 77.4L1160 109.7M444 45L1160 48.6" fill="none" stroke="#a8d0ff" stroke-width="1" opacity="0.8" shape-rendering="crispEdges"/><g clip-path="url(#gp2)"><path d="M696.4 258.7L703.6 298.7M703.5 260.2L710.2 300.2M710.6 261.7L716.8 301.7M717.9 263.1L723.5 303.1M725.1 264.6L730.2 304.6M732.5 266.1L737 306.1M739.9 267.7L743.8 307.7M747.4 269.2L750.7 309.2M754.9 270.7L757.6 310.7M762.5 272.3L764.6 312.3M770.1 273.9L771.7 313.9M777.8 275.4L778.7 315.4M785.6 277L785.9 317M793.4 278.6L793.1 318.6M801.3 280.2L800.3 320.2M809.3 281.9L807.6 321.9M817.3 283.5L814.9 323.5M825.3 285.2L822.3 325.2M833.5 286.8L829.8 326.8M841.6 288.5L837.3 328.5M849.9 290.2L844.8 330.2M858.2 291.9L852.4 331.9M866.5 293.6L860 333.6M875 295.3L867.7 335.3M883.4 297.1L875.4 337.1M892 298.8L883.2 338.8M900.6 300.6L891 340.6M909.2 302.4L898.9 342.4M917.9 304.1L906.8 344.1M926.7 305.9L914.8 345.9M935.5 307.8L922.8 347.8M944.3 309.6L930.9 349.6M953.3 311.4L938.9 351.4M962.3 313.2L947.1 353.2M971.3 315.1L955.3 355.1M980.4 317L963.5 357M989.5 318.8L971.8 358.8M998.7 320.7L980.1 360.7M1008 322.6L988.4 362.6M1017.3 324.5L996.8 364.5M1026.6 326.4L1005.2 366.4M1036 328.4L1013.7 368.4M1045.5 330.3L1022.2 370.3M1055 332.3L1030.7 372.3M1064.6 334.2L1039.3 374.2M1074.2 336.2L1047.9 376.2M1083.8 338.2L1056.5 378.2M1093.5 340.2L1065.2 380.2M1103.3 342.2L1073.9 382.2M1113.1 344.2L1082.6 384.2M1122.9 346.2L1091.4 386.2M1132.8 348.2L1100.2 388.2M1142.7 350.2L1109 390.2M1152.7 352.3L1117.9 392.3M1162.7 354.3L1126.8 394.3M684 262.6L1160 361.8M684 269.8L1160 370.8M684 277.8L1160 380.8" fill="none" stroke="#8cc0f0" stroke-width="1" opacity="0.45" shape-rendering="crispEdges"/></g><line x1="444" y1="207" x2="1160" y2="354" stroke="#8a7a78" stroke-width="1" opacity="0.45"/><polygon points="562,258.6 1048,366 1016,366 565,262.5" fill="#7fb4e0"/><line x1="562" y1="258.6" x2="1048" y2="366" stroke="#86e05a" stroke-width="1" stroke-dasharray="4 2"/><line x1="565" y1="262.5" x2="1018" y2="366" stroke="#86e05a" stroke-width="1" stroke-dasharray="4 2"/><line x1="562" y1="258.6" x2="733" y2="148.5" stroke="#8fe070" stroke-width="1"/><line x1="566" y1="259.5" x2="736" y2="149.5" stroke="#8fe070" stroke-width="0.8" stroke-dasharray="2 2"/><line x1="733" y1="148.5" x2="782" y2="118.5" stroke="#92e47a" stroke-width="2.2" stroke-dasharray="2 1.5"/><line x1="1068" y1="140.4" x2="1160" y2="198" stroke="#8fe070" stroke-width="1.6" stroke-dasharray="2 1.5"/><polygon points="781.7,108 797,104.5 817,108.5 806.7,112.5 806.7,126 788,128 781.7,122" fill="#a0978a"/><polygon points="781.7,108 797,104.5 817,108.5 806.7,112.5 788,112" fill="#b0a594"/><path d="M781.7 108l15.3-3.5 20 4-10.3 4-18.7-0.5zM781.7 108v14l6.3 6 18.7-2M788 112v16M788 120h18" fill="none" stroke="#7fe060" stroke-width="1"/><polygon points="806.5,112.3 820,106.5 907,107 905,113.5" fill="#cfe1f0"/><polygon points="806.2,112.3 905,113.5 900,185 857,174.6 806,169.4" fill="#bccbd3"/><polygon points="891.4,125.3 906.4,124 899.9,186 858.3,175.5" fill="#5f7894"/><path d="M812.3 112.4L810.6 169.9M818.3 112.5L815.1 170.5M824.4 112.6L819.7 171M830.4 112.6L824.3 171.6M836.5 112.7L828.9 172.1M842.5 112.8L833.4 172.7M848.6 112.9L838 173.2M854.7 113L842.6 173.7M860.7 113.1L847.1 174.3M866.8 113.2L851.7 174.8M872.8 113.2L856.3 175.4M878.9 113.3L860.9 175.9M884.9 113.4L865.4 176.5M806.2 118L888.9 119.8M806.2 123.7L886.8 126.2M806.1 129.4L884.7 132.6M806.1 135.1L882.6 138.9M806.1 140.8L880.5 145.2M806.1 146.6L878.4 151.6M806.1 152.3L876.3 157.9M806 158L874.2 164.3M806 163.7L872.1 170.7" fill="none" stroke="#e8f2ff" stroke-width="1" opacity="0.4" shape-rendering="crispEdges"/><line x1="806" y1="120" x2="905" y2="125.5" stroke="#98e884" stroke-width="1" opacity="0.8"/><polygon points="887.7,99.5 903,98 904.4,111 889,113" fill="#a5803c"/><path d="M887.7 99.5l15.3-1.5 1.4 13-15.4 2zM895.5 98.8l0.8 13.5M888.3 106.3l15.5-1.5" fill="none" stroke="#8fe070" stroke-width="0.8"/><polygon points="907,92.3 1084.2,99 1031.3,229.8 894,212" fill="#cbd5da"/><path d="M913.8 92.6L899.3 212.7M920.6 92.8L904.6 213.4M927.4 93.1L909.8 214.1M934.3 93.3L915.1 214.7M941.1 93.6L920.4 215.4M947.9 93.8L925.7 216.1M954.7 94.1L931 216.8M961.5 94.4L936.2 217.5M968.3 94.6L941.5 218.2M975.2 94.9L946.8 218.8M982 95.1L952.1 219.5M988.8 95.4L957.4 220.2M995.6 95.7L962.6 220.9M1002.4 95.9L967.9 221.6M1009.2 96.2L973.2 222.3M1016 96.4L978.5 223M1022.9 96.7L983.8 223.6M1029.7 96.9L989.1 224.3M1036.5 97.2L994.3 225M1043.3 97.5L999.6 225.7M1050.1 97.7L1004.9 226.4M1056.9 98L1010.2 227.1M1063.8 98.2L1015.5 227.7M1070.6 98.5L1020.7 228.4M1077.4 98.7L1026 229.1M906.4 98.3L1081.6 105.5M905.7 104.3L1078.9 112.1M905 110.3L1076.3 118.6M904.4 116.2L1073.6 125.2M903.8 122.2L1071 131.7M903.1 128.2L1068.3 138.2M902.5 134.2L1065.7 144.8M901.8 140.2L1063 151.3M901.1 146.2L1060.4 157.9M900.5 152.2L1057.8 164.4M899.9 158.1L1055.1 170.9M899.2 164.1L1052.5 177.5M898.5 170.1L1049.8 184M897.9 176.1L1047.2 190.6M897.2 182.1L1044.5 197.1M896.6 188.1L1041.9 203.6M896 194L1039.2 210.2M895.3 200L1036.6 216.7M894.6 206L1033.9 223.3" fill="none" stroke="#f4f8ff" stroke-width="1" opacity="0.45" shape-rendering="crispEdges"/><polygon points="907,92.3 1084.2,99 1083,101.5 906.7,95" fill="#e8f0f4"/><polygon points="1054,98 1058,92 1076,98.5" fill="#4d6788"/><polygon points="911.7,213.2 929.4,169.5 1000,176.8 983.5,222.5" fill="#566fa0"/><polygon points="915.5,210.5 932,173 995.5,179.5 980.5,218.8" fill="#b8d4ea"/><path d="M918.2 204.2L983 212.2M921 198L985.5 205.7M923.8 191.8L988 199.2M926.5 185.5L990.5 192.6M929.2 179.2L993 186.1M922 211.3L938.4 173.7M928.5 212.2L944.7 174.3M935 213L951 174.9M941.5 213.8L957.4 175.6M948 214.7L963.8 176.2M954.5 215.5L970.1 176.9M961 216.3L976.5 177.6M967.5 217.1L982.8 178.2M974 218L989.1 178.8" fill="none" stroke="#ffffff" stroke-width="1" opacity="0.4" shape-rendering="crispEdges"/><polygon points="1056,171.6 1121.7,231.9 1035.4,219.4" fill="#c3dcec"/><polygon points="1038.5,209 1100,213 1121.7,231.9 1035.4,219.4" fill="#e2eff7"/><polygon points="1058,176 1108,213 1088,205 1070,190" fill="#5f7f9e" opacity="0.8"/><polygon points="1063.5,174.7 1068.6,167.4 1088.4,182 1082,192.4" fill="#67632c"/><polygon points="1084,192.4 1096.7,170.5 1131,190.3 1115.4,219.4 1109,214" fill="#6a662d"/><polygon points="1131,190.3 1115.4,219.4 1112.5,217 1128,188.5" fill="#e0a23a"/><polygon points="1068.6,167.4 1088.4,182 1089.5,180 1070,165.8" fill="#d89a38"/><path d="M1063.5 174.7l5.1-7.3 19.8 14.6-6.4 10.4M1084 192.4l12.7-21.9 34.3 19.8-15.6 29.1" fill="none" stroke="#8fe060" stroke-width="0.9"/><polygon points="635.9,213.6 649.5,181 657,175.5 674,175 674,160 680,155.5 715,155.5 699,174 701,174.5 699.5,206.9" fill="#e2a348"/><polygon points="635.9,213.6 699.5,206.9 709,260.9 652.3,270.5" fill="#d79a35"/><polygon points="715,155.5 716,157.3 718,179 705,196.4 709.5,249 709,261 699.5,207 701,174.5 699,174" fill="#67655c"/><path d="M643 212.9L658.6 269.4M650 212.1L664.9 268.4M657.1 211.4L671.2 267.3M664.2 210.6L677.5 266.2M671.2 209.9L683.8 265.2M678.3 209.1L690.1 264.1M685.4 208.4L696.4 263M692.4 207.6L702.7 262M637.9 220.7L700.7 213.7M640 227.8L701.9 220.4M642 234.9L703.1 227.2M644.1 242.1L704.2 233.9M646.1 249.2L705.4 240.6M648.2 256.3L706.6 247.4M650.2 263.4L707.8 254.1" fill="none" stroke="#f6cc80" stroke-width="1" opacity="0.55"/><path d="M655.9 180.2L643.9 212.8M662.4 179.4L651.8 211.9M668.8 178.6L659.8 211.1M675.2 177.8L667.7 210.2M681.7 176.9L675.6 209.4M688.1 176.1L683.6 208.6M694.6 175.3L691.5 207.7M646.8 187.5L700.7 181M644.1 194L700.4 187.5M641.3 200.6L700.1 193.9M638.6 207.1L699.8 200.4" fill="none" stroke="#f6cc80" stroke-width="1" opacity="0.5"/><path d="M687 155.5L680.6 175.6M694 155.5L685.2 175.2M701 155.5L689.8 174.8M708 155.5L694.4 174.4M678.7 162.3L709.7 161.7M677.3 169.2L704.3 167.8" fill="none" stroke="#f6cc80" stroke-width="1" opacity="0.5"/><path d="M635.9 213.6l63.6-6.7 9.5 54M635.9 213.6l16.4 56.9M635.9 213.6l13.6-32.6 7.5-5.5M674 160l6-4.5h35M657 175.5l44-1" fill="none" stroke="#8fe060" stroke-width="1"/><path d="M699.5 207l1.5-32.5-2-0.5 16-18.5 3 23.5-13 17.4 4 52.6" fill="none" stroke="#8fe060" stroke-width="0.9" stroke-dasharray="3 2"/><polygon points="716,157.3 724,150 750.5,150.5 741,157.5" fill="#c9a450"/><polygon points="716,157.3 741,157.5 739.5,170 716.8,168" fill="#c39a45"/><polygon points="741,157.5 750.5,150.5 750.5,158 739.5,170" fill="#8a8068"/><path d="M716 157.3l8-7.3 26.5 0.5-9.5 7zM716 157.3l0.8 10.7 22.7 2 11-12v-7.5M741 157.5l-1.5 12.5M728.5 157.4l-0.5 11.6M716.4 162.6l24 1.4" fill="none" stroke="#8fe060" stroke-width="0.9"/><line x1="664.6" y1="147" x2="676" y2="193.6" stroke="#c8ebdc" stroke-width="2.4"/><polygon points="664,164 672,161.5 679.5,164 679,172 671,174 664.5,172" fill="#e09850"/><polygon points="676,170 682,168 682.5,176 677,178.5" fill="#8ac040"/><polygon points="660.5,173.5 665,170.5 673,172 674.5,178 668,181.5 661,179" fill="#9cc8f0"/><path d="M660.5 173.5l4.5-3 8 1.5 1.5 6-6.5 3.5-7-2.5z" fill="none" stroke="#2a4a6a" stroke-width="0.7"/><polygon points="672,180 677,179 676,193" fill="#55564a"/><polygon points="777,203.4 785,210 805,248 797.4,251.7 782,225" fill="#37597a" opacity="0.8"/><polygon points="778.7,195.6 798.2,192.8 828.6,240 805.2,245.5" fill="#666a70" stroke="#7380b0" stroke-width="1.2"/><polygon points="814.5,248.6 825.5,214.6 845.7,217.4 828.6,276.6" fill="#666a70" stroke="#7380b0" stroke-width="1.2"/><path d="M780.5 197.5l25 46.5 20.5-5l-7-10" fill="none" stroke="#eef4fa" stroke-width="1.8"/><path d="M842.6 221.3l-14 52.2" fill="none" stroke="#d0dcf4" stroke-width="1.4"/><rect x="794.5" y="207" width="4.5" height="4.5" fill="#dce4ec"/><polygon points="809,254 817,253 822,264 818,279 810,279 808.5,266" fill="#8c98a0" opacity="0.9"/><polygon points="812,255 816,254.5 817,262 813,263" fill="#c0c8cc"/><polygon points="803.6,284 812,273.5 822.3,284" fill="#5aa8e8" opacity="0.9"/><circle cx="922.5" cy="163.3" r="5.6" fill="#3f9ae8"/><polygon points="919,168 926,168 927,190 920,190" fill="#5a98e0" opacity="0.85"/><polygon points="907.6,167.4 920,167.4 920,187 907.6,187" fill="#c8dcf8" opacity="0.7"/><rect x="906" y="186" width="23" height="11" fill="none" stroke="#98f070" stroke-width="1"/><path d="M906 131l175 -6M985 112l60 3-4 14-62-3zM960 120l40 2-3 12-40-2zM930 124l25 1-2 10-25-1z" fill="none" stroke="#98ee80" stroke-width="0.8" opacity="0.6"/><line x1="942" y1="116" x2="929.4" y2="188.2" stroke="#98ec6a" stroke-width="1.6"/><polygon points="946.6,93.8 950,116.5 942,118 934,116" fill="#a6e83c"/><polygon points="946.6,93.8 934,116 936.5,116.5" fill="#2f3a10"/><line x1="928.4" y1="188.8" x2="1006.3" y2="197" stroke="#e8954a" stroke-width="1.8"/><polygon points="1008,191.5 1030.2,200.3 1008.5,204" fill="#e07f22"/><ellipse cx="1008" cy="197.7" rx="2.8" ry="6.4" fill="#141414"/><path d="M943 214l5 5" fill="none" stroke="#5a9ad8" stroke-width="2.4" stroke-linecap="round"/><polygon points="1059.7,322.8 1070,304.6 1084.6,328 1072.8,346.6" fill="#55592a"/><polygon points="1070,304.6 1139.5,316.6 1160,341.5 1084.6,328" fill="#e2a43c"/><polygon points="1084.6,328 1160,341.5 1160,344 1146,362 1072.8,346.6" fill="#d8962f"/><path d="M1070 304.6l55 24M1139.5 316.6l-55 11.4M1084.6 328l61 34M1160 341.5l-87.2 5.1M1107 311l-36 13" fill="none" stroke="#f4c878" stroke-width="0.8" opacity="0.6"/><path d="M1059.7 322.8l10.3-18.2 69.5 12 20.5 24.9M1070 304.6l14.6 23.4 75.4 13.5M1084.6 328l-11.8 18.6 72.9 15.4M1059.7 322.8l13.1 23.8M1107 311l16 24-12 19" fill="none" stroke="#8fe060" stroke-width="1"/><path d="M670.4 20L674.7 45M685.5 20L782.5 331M753.5 274L781.4 332M798 333L1025 131M1067 94L1150 20" fill="none" stroke="#ffffff" stroke-width="1.2"/><path d="M1067 94L1025 131" fill="none" stroke="#ffffff" stroke-width="1" opacity="0.35"/><path d="M798 339.3L886 302" fill="none" stroke="#ffffff" stroke-width="1.2"/><g><path d="M795.5 333.5l7 -1.5v13l-4 0.5v12h-21.5l-1-2h19v-9.5z" fill="#3a140c"/><circle cx="778.5" cy="336.3" r="4.2" fill="#6c6c6c"/><circle cx="783" cy="334.5" r="3" fill="#585858"/><circle cx="779.8" cy="343.5" r="5.6" fill="#ffffff"/><circle cx="788.2" cy="340.2" r="6.3" fill="#ffffff"/><rect x="777" y="343" width="18" height="12.3" rx="1.5" fill="#ffffff"/><path d="M794.5 347.5l7.5-4.3v11l-7.5-3.5z" fill="#ffffff"/></g><g><ellipse cx="1104" cy="87.6" rx="9.5" ry="8" fill="#e4e6e8"/><path d="M1098 80l14-7v17z" fill="#5a5e62"/><path d="M1111 77l6 17-9-1z" fill="#f4f4f4"/><path d="M1087.4 62.5l17.6 7-17.6 4.5z" fill="#f6f6f6"/><path d="M1087.4 73l17.6-3.5-16 5z" fill="#b8b8b8"/><path d="M1106 65l3-3.5h11l1.7 2.5v14l-3.2 3h-12.5z" fill="#e2e2e2"/><path d="M1106 65l3-3.5h11l1.7 2.5-3.2 1z" fill="#a0a0a0"/><path d="M1118.5 65l3.2-1v14l-3.2 3z" fill="#8a8a8a"/><circle cx="1120.6" cy="60.5" r="4.2" fill="#2f9ae4"/><path d="M1107 40.8h14.7l-6.7 21z" fill="#6aa832"/><path d="M1107 40.8l8 21-1.5-21z" fill="#4a7a20"/><path d="M1122.7 72l21.8-4.2v13.5z" fill="#d87c2a"/><path d="M1144.5 67.8v13.5l-3-0.5v-12.5z" fill="#8a4a14"/></g><text x="1110" y="35" font-size="13.5" fill="#ffffff" font-family="Liberation Sans, sans-serif">y</text><text x="1119.5" y="57.5" font-size="12.5" fill="#ffffff" font-family="Liberation Sans, sans-serif">z</text><text x="1146" y="79.5" font-size="13.5" fill="#ffffff" font-family="Liberation Sans, sans-serif">x</text><path d="M1144 36v-2a2.8 2.8 0 0 1 5.6 0" fill="none" stroke="#aab4c4" stroke-width="1.2" opacity="0.9"/><rect x="1142.5" y="36.5" width="9.5" height="6" rx="1" fill="#aab4c4" opacity="0.9"/><path d="M1098.5 116.5l-7.5 4 7.5 4" fill="none" stroke="#c0d6e6" stroke-width="1.1" opacity="0.95"/><text x="1102.5" y="125.2" font-size="12" fill="#c0d6e6" opacity="0.95" font-family="Liberation Sans, sans-serif">Persp</text><rect x="740" y="30" width="126.5" height="21.7" rx="3.5" fill="#565656" opacity="0.93"/><path d="M743.5 30h28v21.7h-28a3.5 3.5 0 0 1-3.5-3.5v-14.7a3.5 3.5 0 0 1 3.5-3.5z" fill="#303030" opacity="0.95"/><path d="M802.5 30v21.7M834 30v21.7" stroke="#262626" stroke-width="1.8"/><path d="M744 30.5l1.3 21M750.3 30.5l1.1 21M756.6 30.5l0.9 21M762.9 30.5l0.8 21M769.2 30.5l0.6 21M775.5 30.5l0.4 21M781.8 30.5l0.2 21M788.1 30.5l0 21M794.4 30.5l-0.2 21M800.7 30.5l-0.3 21M807 30.5l-0.5 21M813.3 30.5l-0.7 21M819.6 30.5l-0.9 21M825.9 30.5l-1.1 21M832.2 30.5l-1.3 21M838.5 30.5l-1.4 21M844.8 30.5l-1.6 21M851.1 30.5l-1.8 21M857.4 30.5l-2 21M863.7 30.5l-2.2 21M740.5 33.3L866 32.9M740.5 40.6L866 40.2M740.5 47.7L866 47.3" fill="none" stroke="#a8d0ff" stroke-width="1" opacity="0.22" shape-rendering="crispEdges"/><path d="M755.5 34.2l5.8 3.4v6.8L755.5 47.8l-5.8-3.4v-6.8z" fill="none" stroke="#e8a860" stroke-width="1"/><path d="M749.7 37.6L755.5 41l5.8-3.4M755.5 41v6.8" fill="none" stroke="#c4c8cc" stroke-width="1"/><rect x="782" y="36.5" width="9" height="9" fill="none" stroke="#c4c8cc" stroke-width="1" stroke-dasharray="3.5 2"/><circle cx="782" cy="36.5" r="1.5" fill="#e8a860"/><circle cx="782" cy="45.5" r="1.5" fill="#e8a860"/><circle cx="791" cy="36.5" r="1.5" fill="#e8a860"/><circle cx="791" cy="45.5" r="1.5" fill="#e8a860"/><path d="M818 34.2l5.8 3.4v6.8L818 47.8l-5.8-3.4v-6.8z" fill="none" stroke="#bcbcbc" stroke-width="1"/><path d="M812.2 37.6L818 41l5.8-3.4M818 41v6.8" fill="none" stroke="#e8a860" stroke-width="1"/><path d="M844.2 37.7L850 41v6.8l-5.8-3.3z" fill="#e8a860"/><path d="M850 34.2l5.8 3.4v6.8L850 47.8l-5.8-3.4v-6.8z" fill="none" stroke="#bcbcbc" stroke-width="1"/><path d="M844.2 37.6L850 41l5.8-3.4M850 41v6.8" fill="none" stroke="#bcbcbc" stroke-width="1"/><rect x="452.5" y="28.5" width="41.5" height="14.5" rx="3" fill="#17191c" fill-opacity="0.9" stroke="#29a8ea" stroke-width="1.2"/><text x="468.5" y="40.5" font-size="11.5" fill="#e8e8e8" font-family="Liberation Sans, sans-serif">.1</text><rect x="452.5" y="47.5" width="41.5" height="14.5" rx="3" fill="#17191c" fill-opacity="0.9" stroke="#29a8ea" stroke-width="1.2"/><path d="M455 55c3.5-4.5 7-6 10-6s6.5 1.5 10 6c-3.5 4.5-7 6-10 6s-6.5-1.5-10-6z" fill="#29a8ea"/><circle cx="465" cy="55" r="2.6" fill="#1b1d20"/><circle cx="465" cy="55" r="1" fill="#29a8ea"/><path d="M478 52l14 3M477 57l15 3M481 48l-2 13M487 48l-2 14" fill="none" stroke="#29a8ea" stroke-width="1.1"/><rect x="452.5" y="66.8" width="41.5" height="14.5" rx="3" fill="#17191c" fill-opacity="0.9" stroke="#29a8ea" stroke-width="1.2"/><path d="M474 67.5v13.5" stroke="#29a8ea" stroke-width="1"/><text x="475.5" y="78.7" font-size="11" font-weight="700" fill="#29a8ea" font-family="Liberation Sans, sans-serif">ON</text><rect x="452.5" y="85.7" width="41.5" height="14.5" rx="3" fill="#17191c" fill-opacity="0.9" stroke="#29a8ea" stroke-width="1.2"/><path d="M456 90.5h8v-3l6.5 5.5-6.5 5.5v-3h-8z" fill="#29a8ea"/><path d="M478 90l14 3M477 95l15 3M481 86l-2 13M487 86l-2 14" fill="none" stroke="#29a8ea" stroke-width="1.1"/><rect x="452.5" y="104.8" width="41.5" height="14.5" rx="3" fill="#17191c" fill-opacity="0.9" stroke="#29a8ea" stroke-width="1.2"/><path d="M472.5 105.5v13.5" stroke="#29a8ea" stroke-width="1"/><path d="M479.5 111.5v-1.5a3 3 0 0 1 6 0v0.5" fill="none" stroke="#29a8ea" stroke-width="1.5"/><rect x="478" y="112" width="10" height="5.5" fill="#29a8ea"/><rect x="452.5" y="127.2" width="41.5" height="14.5" rx="3" fill="#17191c" fill-opacity="0.9"/><text x="458" y="140" font-size="13" fill="#a8a8a0" font-family="Liberation Sans, sans-serif">X</text><path d="M478 132l14 3M477 137l15 3M481 128l-2 13M487 128l-2 14" fill="none" stroke="#8a8478" stroke-width="1.1"/><rect x="452.5" y="146.3" width="41.5" height="14.5" rx="3" fill="#17191c" fill-opacity="0.9"/><text x="458" y="159" font-size="13" fill="#8c8c84" font-family="Liberation Sans, sans-serif">Y</text><path d="M478 151l14 3M477 156l15 3M481 147l-2 13M487 147l-2 14" fill="none" stroke="#7a766c" stroke-width="1.1"/><rect x="452.5" y="165.4" width="41.5" height="14.5" rx="3" fill="#17191c" fill-opacity="0.9"/><text x="458" y="178" font-size="13" fill="#2f96d4" font-family="Liberation Sans, sans-serif">Z</text><path d="M478 170l14 3M477 175l15 3M481 166l-2 13M487 166l-2 14" fill="none" stroke="#2f96d4" stroke-width="1.1"/><rect x="452.5" y="184.5" width="41.5" height="14.5" rx="3" fill="#17191c" fill-opacity="0.9"/><text x="455" y="197" font-size="13" fill="#7c7c7c" font-family="Liberation Sans, sans-serif">3D</text><path d="M478 189l6-2 6 2-1 6-5 3-5-3z" fill="#a8a8a8"/><path d="M478 189l6 2 6-2M484 191v7" fill="none" stroke="#e0e0e0" stroke-width="0.8"/><rect x="444" y="42" width="2" height="324" fill="#6982b4" opacity="0.9"/><rect x="444" y="364" width="716" height="2" fill="#6982b4" opacity="0.95"/></svg>
<div class="a " style="left:0px;top:366px;width:1160px;height:2px;background:#131313;"></div>
<div class="a " style="left:0px;top:368px;width:1160px;height:19px;background:#202020;"></div>
<svg class="a" style="left:3px;top:372px;" width="13" height="12" viewBox="0 0 13 12"><path d="M0.5 1.5h4.5l1.5 1.8h6v8h-12z" fill="#a8a8a8"/></svg>
<span class="a t" style="left:19.5px;top:370.84px;font-size:12.5px;color:#bebebe;letter-spacing:0.085px;">Project</span>
<div class="a " style="left:78px;top:368px;width:110px;height:19px;background:#2e2e2e;border-radius:3px 3px 0 0;"></div>
<svg class="a" style="left:84px;top:372px;" width="13" height="12" viewBox="0 0 13 12"><path d="M4.5 0.5h4v3.5h-4zM0.5 8h3.5v3.5h-3.5zM4.75 8h3.5v3.5h-3.5zM9 8h3.5v3.5h-3.5z" fill="#c4c4c4"/><path d="M6.5 4v2M2.25 8v-2h8.5v2M6.5 6v2" fill="none" stroke="#c4c4c4" stroke-width="1"/></svg>
<span class="a t" style="left:101.5px;top:370.84px;font-size:12.5px;color:#c8c8c8;letter-spacing:-0.055px;">Script Graph</span>
<svg class="a" style="left:198px;top:372px;" width="12" height="12" viewBox="0 0 12 12"><rect x="0.5" y="0.5" width="10.5" height="10.5" rx="1" fill="#c4c4c4"/><path d="M2.5 3.5h6.5M2.5 6h6.5M2.5 8.5h6.5" stroke="#1e1e1e" stroke-width="1.1"/></svg>
<span class="a t" style="left:213.5px;top:370.84px;font-size:12.5px;color:#bebebe;letter-spacing:-0.123px;">Console</span>
<svg class="a" style="left:1148px;top:371px;" width="8" height="12" viewBox="0 0 8 12"><circle cx="4" cy="2" r="1.1" fill="#bebebe"/><circle cx="4" cy="6" r="1.1" fill="#bebebe"/><circle cx="4" cy="10" r="1.1" fill="#bebebe"/></svg>
<div class="a " style="left:0px;top:387px;width:1160px;height:20px;background:#2b2b2b;"></div>
<div class="a " style="left:0px;top:407px;width:1160px;height:1px;background:#1a1a1a;"></div>
<svg class="a" style="left:4px;top:390px;" width="10" height="14" viewBox="0 0 10 14"><path d="M2.5 6v-2a2.5 2.5 0 0 1 5 0v2" fill="none" stroke="#aaaaaa" stroke-width="1.4"/><rect x="1" y="6" width="8" height="6" rx="0.8" fill="#aaaaaa"/></svg>
<div class="a " style="left:21px;top:387px;width:23px;height:20px;background:#444444;"></div>
<svg class="a" style="left:27px;top:391px;" width="12" height="12" viewBox="0 0 12 12"><circle cx="6" cy="6" r="5.2" fill="#c0c0c0"/><rect x="5.2" y="5" width="1.7" height="4.2" fill="#444"/><circle cx="6" cy="3.2" r="1" fill="#444"/></svg>
<div class="a " style="left:45px;top:387px;width:23px;height:20px;background:#444444;"></div>
<svg class="a" style="left:49px;top:392px;" width="16" height="10" viewBox="0 0 16 10"><path d="M4 0.8L0.8 5 4 9.2M12 0.8L15.2 5 12 9.2M6 3l4 4M10 3l-4 4" fill="none" stroke="#b0b0b0" stroke-width="1.1"/></svg>
<svg class="a" style="left:80px;top:389px;" width="15" height="15" viewBox="0 0 30 30"><path d="M1 17.5l8-3.5 8.5 3.5v7.5l-8.5 4-8-4z" fill="#5c9cd8"/><path d="M1 17.5l8.5 3.5 8-3.5-8.5-3.5z" fill="#9ccaf0"/><path d="M16 13l7-3 6 3v7l-6 3.5-7-3.5z" fill="#7cb840"/><path d="M16 13l7 3 6-3-6-3z" fill="#a8d868"/><path d="M5.5 5.5l8.5-4 9 3.5v9.5l-9 4.5-8.5-4.5z" fill="#d89030"/><path d="M5.5 5.5l8.5 4 9-4-9-4z" fill="#f0b860"/><path d="M14 9.5v9.5" stroke="#f0b860" stroke-width="0.8"/></svg>
<span class="a t" style="left:99.3px;top:389.02px;font-size:10.3px;color:#b0b0b0;letter-spacing:-0.414px;">Box_350x250x300_Prefab</span>
<span class="a t" style="left:238px;top:389.11px;font-size:10px;color:#9a9a9a;letter-spacing:-0.515px;">Zoom</span>
<div class="a " style="left:267px;top:397.3px;width:93px;height:2px;background:#555555;"></div>
<div class="a " style="left:357px;top:392.5px;width:10px;height:10px;background:#9a9a9a;border-radius:5px;"></div>
<span class="a t" style="left:371px;top:389.11px;font-size:10px;color:#9a9a9a;letter-spacing:-1.03px;">1x</span>
<div class="a " style="left:737px;top:387px;width:59px;height:20px;background:#333333;"></div>
<span class="a t" style="left:741.5px;top:389.74px;font-size:12.5px;color:#bebebe;letter-spacing:-0.068px;">Relations</span>
<div class="a " style="left:797px;top:387px;width:45px;height:20px;background:#333333;"></div>
<span class="a t" style="left:801.2px;top:389.74px;font-size:12.5px;color:#bebebe;letter-spacing:0.118px;">Values</span>
<div class="a " style="left:843px;top:387px;width:29px;height:20px;background:#333333;"></div>
<span class="a t" style="left:847.5px;top:389.74px;font-size:12.5px;color:#bebebe;letter-spacing:-0.239px;">Dim</span>
<div class="a " style="left:873px;top:387px;width:38px;height:20px;background:#333333;"></div>
<span class="a t" style="left:876.5px;top:389.74px;font-size:12.5px;color:#bebebe;letter-spacing:-0.211px;">Carry</span>
<div class="a " style="left:912px;top:387px;width:46px;height:20px;background:#333333;"></div>
<span class="a t" style="left:915.5px;top:389.74px;font-size:12.5px;color:#6a6a6a;letter-spacing:-0.159px;">Align</span>
<svg class="a" style="left:946px;top:394px;" width="9" height="6" viewBox="0 0 9 6"><path d="M0.3 0.8h7.4L4 5.2z" fill="#6a6a6a"/></svg>
<div class="a " style="left:959px;top:387px;width:69px;height:20px;background:#333333;"></div>
<span class="a t" style="left:962.8px;top:389.74px;font-size:12.5px;color:#6a6a6a;letter-spacing:-0.029px;">Distribute</span>
<svg class="a" style="left:1018.5px;top:394px;" width="9" height="6" viewBox="0 0 9 6"><path d="M0.3 0.8h7.4L4 5.2z" fill="#6a6a6a"/></svg>
<div class="a " style="left:1032px;top:387px;width:61px;height:20px;background:#333333;"></div>
<span class="a t" style="left:1036.8px;top:389.74px;font-size:12.5px;color:#bebebe;letter-spacing:0.014px;">Overview</span>
<div class="a " style="left:1094px;top:387px;width:66px;height:20px;background:#333333;"></div>
<span class="a t" style="left:1097.5px;top:389.74px;font-size:12.5px;color:#bebebe;letter-spacing:-0.111px;">Full Screen</span>
<div class="a " style="left:736px;top:387px;width:1px;height:20px;background:#1e1e1e;"></div>
<div class="a " style="left:0px;top:408px;width:331px;height:362px;background:#2e2e2e;"></div>
<div class="a " style="left:0px;top:408px;width:277px;height:18px;background:#2d2d2d;border:1px solid #1c1c1c;border-left:none;"></div>
<svg class="a" style="left:2px;top:410px;" width="12" height="12" viewBox="0 0 12 12"><circle cx="6" cy="6" r="5.2" fill="#b0b0b0"/><rect x="5.2" y="5" width="1.7" height="4.2" fill="#2d2d2d"/><circle cx="6" cy="3.2" r="1" fill="#2d2d2d"/></svg>
<span class="a t" style="left:17.5px;top:408.54px;font-size:12.5px;color:#bebebe;letter-spacing:-0.408px;">Graph Inspector</span>
<svg class="a" style="left:283px;top:411px;" width="11" height="12" viewBox="0 0 11 12"><path d="M0.5 1.5l5 4.5-5 4.5z" fill="#b0b0b0"/><path d="M6.5 0.8h3v10.5h-3" fill="none" stroke="#b0b0b0" stroke-width="1.3"/></svg>
<div class="a " style="left:298px;top:408px;width:16px;height:18px;background:#2a2a2a;border:1px solid #1c1c1c;"></div>
<svg class="a" style="left:302px;top:410px;" width="8" height="5" viewBox="0 0 8 5"><path d="M4 0.5l3.5 4h-7z" fill="#5a5a5a"/></svg>
<svg class="a" style="left:302px;top:419px;" width="8" height="5" viewBox="0 0 8 5"><path d="M4 4.5l3.5-4h-7z" fill="#c0c0c0"/></svg>
<div class="a " style="left:299px;top:416.5px;width:14px;height:1px;background:#1c1c1c;"></div>
<div class="a " style="left:0px;top:426px;width:300px;height:50px;background:#303030;"></div>
<svg class="a" style="left:3px;top:434.5px;" width="30" height="30" viewBox="0 0 30 30"><path d="M1 17.5l8-3.5 8.5 3.5v7.5l-8.5 4-8-4z" fill="#5c9cd8"/><path d="M1 17.5l8.5 3.5 8-3.5-8.5-3.5z" fill="#9ccaf0"/><path d="M16 13l7-3 6 3v7l-6 3.5-7-3.5z" fill="#7cb840"/><path d="M16 13l7 3 6-3-6-3z" fill="#a8d868"/><path d="M5.5 5.5l8.5-4 9 3.5v9.5l-9 4.5-8.5-4.5z" fill="#d89030"/><path d="M5.5 5.5l8.5 4 9-4-9-4z" fill="#f0b860"/><path d="M14 9.5v9.5" stroke="#f0b860" stroke-width="0.8"/></svg>
<div class="a " style="left:40.5px;top:432.3px;width:253px;height:18.2px;background:#212121;border:1px solid #191919;border-radius:3px;"></div>
<span class="a t" style="left:44px;top:433.96px;font-size:13.5px;color:#5c5c5c;letter-spacing:0.215px;">(Title)</span>
<div class="a " style="left:40.5px;top:453.3px;width:253px;height:17.5px;background:#212121;border:1px solid #191919;border-radius:3px;"></div>
<span class="a t" style="left:44px;top:454.44px;font-size:12.5px;color:#5c5c5c;letter-spacing:-0.256px;">(Summary)</span>
<div class="a " style="left:0px;top:476px;width:300px;height:1px;background:#1c1c1c;"></div>
<div class="a " style="left:0px;top:477px;width:300px;height:5px;background:#2c2c2c;"></div>
<div class="a " style="left:0px;top:481.5px;width:300px;height:20px;background:#282828;border-top:1px solid #1c1c1c;border-bottom:1px solid #1c1c1c;"></div>
<span class="a t" style="left:0.8px;top:483.64px;font-size:12.5px;color:#bebebe;letter-spacing:-0.025px;">Trigger Inputs</span>
<div class="a " style="left:0px;top:501.5px;width:300px;height:19px;background:#303030;"></div>
<div class="a " style="left:271px;top:501.5px;width:28.5px;height:17.5px;background:#3a3a3a;border:1px solid #1e1e1e;border-top:none;border-radius:0 0 3px 3px;"></div>
<svg class="a" style="left:280px;top:504.5px;" width="10" height="10" viewBox="0 0 10 10"><path d="M5 1v8M1 5h8" stroke="#c8c8c8" stroke-width="1.4"/></svg>
<div class="a " style="left:0px;top:520.5px;width:271px;height:1px;background:#262626;"></div>
<div class="a " style="left:0px;top:524.5px;width:300px;height:20px;background:#282828;border-top:1px solid #1c1c1c;border-bottom:1px solid #1c1c1c;"></div>
<span class="a t" style="left:0.8px;top:526.64px;font-size:12.5px;color:#bebebe;letter-spacing:-0.025px;">Trigger Outputs</span>
<div class="a " style="left:0px;top:544.5px;width:300px;height:19px;background:#303030;"></div>
<div class="a " style="left:271px;top:544.5px;width:28.5px;height:17.5px;background:#3a3a3a;border:1px solid #1e1e1e;border-top:none;border-radius:0 0 3px 3px;"></div>
<svg class="a" style="left:280px;top:547.5px;" width="10" height="10" viewBox="0 0 10 10"><path d="M5 1v8M1 5h8" stroke="#c8c8c8" stroke-width="1.4"/></svg>
<div class="a " style="left:0px;top:563.5px;width:271px;height:1px;background:#262626;"></div>
<div class="a " style="left:0px;top:567.5px;width:300px;height:20px;background:#282828;border-top:1px solid #1c1c1c;border-bottom:1px solid #1c1c1c;"></div>
<span class="a t" style="left:0.8px;top:569.64px;font-size:12.5px;color:#bebebe;letter-spacing:-0.129px;">Data Inputs</span>
<div class="a " style="left:0px;top:587.5px;width:300px;height:19px;background:#303030;"></div>
<div class="a " style="left:271px;top:587.5px;width:28.5px;height:17.5px;background:#3a3a3a;border:1px solid #1e1e1e;border-top:none;border-radius:0 0 3px 3px;"></div>
<svg class="a" style="left:280px;top:590.5px;" width="10" height="10" viewBox="0 0 10 10"><path d="M5 1v8M1 5h8" stroke="#c8c8c8" stroke-width="1.4"/></svg>
<div class="a " style="left:0px;top:606.5px;width:271px;height:1px;background:#262626;"></div>
<div class="a " style="left:300.5px;top:426px;width:14px;height:182px;background:#2c2c2c;"></div>
<svg class="a" style="left:303px;top:431px;" width="9" height="6" viewBox="0 0 9 6"><path d="M4.5 0.5l4 4.5h-8z" fill="#c0c0c0"/></svg>
<div class="a " style="left:303.2px;top:441.5px;width:9.6px;height:124px;background:#4a4a4a;border-radius:5px;"></div>
<svg class="a" style="left:303px;top:596.5px;" width="9" height="6" viewBox="0 0 9 6"><path d="M4.5 5.5l4-4.5h-8z" fill="#c0c0c0"/></svg>
<div class="a " style="left:0px;top:608.5px;width:277px;height:18px;background:#2d2d2d;border:1px solid #1c1c1c;border-left:none;"></div>
<svg class="a" style="left:0px;top:612px;" width="16" height="10" viewBox="0 0 16 10"><path d="M4 0.8L0.8 5 4 9.2M12 0.8L15.2 5 12 9.2M6 3l4 4M10 3l-4 4" fill="none" stroke="#b0b0b0" stroke-width="1.1"/></svg>
<span class="a t" style="left:17.5px;top:609.44px;font-size:12px;color:#bebebe;letter-spacing:-0.203px;">Blackboard</span>
<svg class="a" style="left:283px;top:611.5px;" width="11" height="12" viewBox="0 0 11 12"><path d="M0.5 1.5l5 4.5-5 4.5z" fill="#b0b0b0"/><path d="M6.5 0.8h3v10.5h-3" fill="none" stroke="#b0b0b0" stroke-width="1.3"/></svg>
<div class="a " style="left:298px;top:608.5px;width:16px;height:18px;background:#2a2a2a;border:1px solid #1c1c1c;"></div>
<svg class="a" style="left:302px;top:610.5px;" width="8" height="5" viewBox="0 0 8 5"><path d="M4 0.5l3.5 4h-7z" fill="#c0c0c0"/></svg>
<svg class="a" style="left:302px;top:619.5px;" width="8" height="5" viewBox="0 0 8 5"><path d="M4 4.5l3.5-4h-7z" fill="#5a5a5a"/></svg>
<div class="a " style="left:299px;top:617px;width:14px;height:1px;background:#1c1c1c;"></div>
<div class="a " style="left:0px;top:627px;width:57px;height:20.5px;background:#2f2f2f;border-right:1px solid #1e1e1e;border-bottom:1px solid #1e1e1e;"></div>
<svg class="a" style="left:0px;top:629px;" width="18" height="18" viewBox="0 0 18 18"><path d="M5.5 1.5L1.6 5.7 5.5 9.9M10.5 1.5L14.4 5.7 12 8.3" fill="none" stroke="#4c98d8" stroke-width="2.7"/><path d="M7.5 8.5l3 -1 2 2v5.5h-5z" fill="#e0a050"/><circle cx="10" cy="8" r="1.8" fill="#c8c8c8"/></svg>
<span class="a t" style="left:18.2px;top:630.84px;font-size:12.5px;color:#bebebe;letter-spacing:-0.148px;">Graph</span>
<div class="a " style="left:58px;top:627px;width:63px;height:20.5px;background:#2f2f2f;border-right:1px solid #1e1e1e;border-bottom:1px solid #1e1e1e;"></div>
<svg class="a" style="left:62px;top:629px;" width="18" height="18" viewBox="0 0 18 18"><path d="M5.5 1.5L1.6 5.7 5.5 9.9M10.5 1.5L14.4 5.7 12 8.3" fill="none" stroke="#4c98d8" stroke-width="2.7"/><path d="M7 9.5l3.5-1.5 3.5 1.5v4l-3.5 1.8-3.5-1.8z" fill="#d89030"/><path d="M7 9.5l3.5 1.5 3.5-1.5" fill="none" stroke="#f0c070" stroke-width="0.7"/></svg>
<span class="a t" style="left:81.2px;top:630.84px;font-size:12.5px;color:#bebebe;letter-spacing:0.229px;">Object</span>
<div class="a " style="left:122px;top:627px;width:63px;height:20.5px;background:#464646;border-right:1px solid #1e1e1e;border-bottom:1px solid #1e1e1e;"></div>
<svg class="a" style="left:126px;top:629px;" width="18" height="18" viewBox="0 0 18 18"><path d="M5.5 1.5L1.6 5.7 5.5 9.9M10.5 1.5L14.4 5.7 12 8.3" fill="none" stroke="#4c98d8" stroke-width="2.7"/><circle cx="11" cy="12" r="4.2" fill="#3a8ee0"/><path d="M9 11l2-2.5 2 1-0.5 2 0.5 2-2 1.5z" fill="#a4dc3c"/></svg>
<span class="a t" style="left:145.3px;top:630.84px;font-size:12.5px;color:#bebebe;letter-spacing:0.012px;">Scene</span>
<div class="a " style="left:186px;top:627px;width:63px;height:20.5px;background:#2f2f2f;border-right:1px solid #1e1e1e;border-bottom:1px solid #1e1e1e;"></div>
<svg class="a" style="left:197px;top:629px;" width="18" height="18" viewBox="0 0 18 18"><path d="M5.5 1.5L1.6 5.7 5.5 9.9M10.5 1.5L14.4 5.7 12 8.3" fill="none" stroke="#4c98d8" stroke-width="2.7"/><circle cx="10.5" cy="11.5" r="3.8" fill="none" stroke="#d0d0d0" stroke-width="1.8" stroke-dasharray="1.8 1.2"/><circle cx="10.5" cy="11.5" r="1.4" fill="#d0d0d0"/></svg>
<span class="a t" style="left:216.3px;top:630.84px;font-size:12.5px;color:#bebebe;letter-spacing:-0.18px;">App</span>
<div class="a " style="left:250px;top:627px;width:64px;height:20.5px;background:#2f2f2f;border-right:1px solid #1e1e1e;border-bottom:1px solid #1e1e1e;"></div>
<svg class="a" style="left:255px;top:629px;" width="18" height="18" viewBox="0 0 18 18"><path d="M5.5 1.5L1.6 5.7 5.5 9.9M10.5 1.5L14.4 5.7 12 8.3" fill="none" stroke="#4c98d8" stroke-width="2.7"/><rect x="6.5" y="7.5" width="8.5" height="8" fill="#5a9ad8"/><rect x="8.5" y="7.5" width="4.5" height="3" fill="#e8e8e8"/><rect x="8.5" y="12.5" width="4.5" height="3" fill="#d0e0f0"/></svg>
<span class="a t" style="left:273.3px;top:630.84px;font-size:12.5px;color:#bebebe;letter-spacing:0.112px;">Saved</span>
<div class="a " style="left:0px;top:648px;width:314px;height:59px;background:#2e2e2e;"></div>
<svg class="a" style="left:3px;top:657px;" width="31" height="32" viewBox="0 0 31 32"><path d="M11 3.5L3 11.5l8 8M20 3.5l8 8-4 4" fill="none" stroke="#4c98d8" stroke-width="4.6"/><circle cx="22.2" cy="23.2" r="8" fill="#3a8ee0"/><path d="M17 20.5l3.5-3.5 4 0.5-1.5 3 2 2.5-2 4.5-3-0.5-0.5-3.5z" fill="#a4dc3c"/><path d="M26.5 19l2.5 3-1 4z" fill="#7cc8e8"/><circle cx="22.2" cy="23.2" r="8" fill="none" stroke="#2a6ab0" stroke-width="0.8"/></svg>
<span class="a t" style="left:41.3px;top:654.66px;font-size:13.5px;color:#bebebe;letter-spacing:0.08px;">Scene Variables</span>
<span class="a t" style="left:41.3px;top:669.94px;font-size:12.5px;color:#b0b0b0;">These variables are shared across the current</span>
<span class="a t" style="left:41.3px;top:684.94px;font-size:12.5px;color:#b0b0b0;letter-spacing:-0.054px;">scene.</span>
<div class="a " style="left:0px;top:707px;width:314.5px;height:63px;background:#3c3c3c;border-top:1px solid #222;"></div>
<span class="a t" style="left:20.5px;top:711.74px;font-size:12.5px;color:#bebebe;letter-spacing:-0.335px;">Name</span>
<div class="a " style="left:57px;top:711.3px;width:227px;height:17.5px;background:#212121;border:1px solid #191919;border-radius:3px;"></div>
<span class="a t" style="left:60px;top:712.64px;font-size:12.5px;color:#c8c8c8;letter-spacing:0.082px;">StarterPlayer</span>
<svg class="a" style="left:3px;top:736px;" width="10" height="8" viewBox="0 0 10 8"><path d="M0.5 2.5h9M0.5 5.5h9" stroke="#7a7a7a" stroke-width="1.1"/></svg>
<span class="a t" style="left:20.5px;top:732.44px;font-size:12.5px;color:#bebebe;letter-spacing:0.101px;">Type</span>
<div class="a " style="left:57px;top:731.3px;width:227px;height:17.5px;background:#444444;border:1px solid #262626;border-radius:3px;"></div>
<svg class="a" style="left:62px;top:732.5px;" width="14" height="16" viewBox="0 0 14 16"><path d="M7 1.5l5.6 2.8v6.4L7 13.7 1.4 10.7V4.3z" fill="none" stroke="#aaaaaa" stroke-width="1" stroke-linejoin="round"/><path d="M1.4 4.3L7 7.2l5.6-2.9M7 7.2v6.5" fill="none" stroke="#aaaaaa" stroke-width="1"/></svg>
<span class="a t" style="left:82px;top:732.34px;font-size:12.5px;color:#c8c8c8;letter-spacing:-0.058px;">Game Object</span>
<svg class="a" style="left:269px;top:737.5px;" width="9" height="6" viewBox="0 0 9 6"><path d="M0.3 0.8h7.4L4 5.2z" fill="#c0c0c0"/></svg>
<div class="a " style="left:295px;top:739px;width:8.5px;height:2.2px;background:#c8c8c8;"></div>
<span class="a t" style="left:20.5px;top:753.44px;font-size:12.5px;color:#bebebe;letter-spacing:-0.208px;">Value</span>
<div class="a " style="left:57px;top:751.3px;width:227px;height:17.5px;background:#212121;border:1px solid #191919;border-radius:3px;"></div>
<svg class="a" style="left:60px;top:754.5px;" width="12" height="13" viewBox="0 0 12 13"><path d="M6 0.8l5.2 2.6v5.7L6 12 0.8 9.1V3.4z" fill="#4c9ae0"/><path d="M0.8 3.4L6 6.1l5.2-2.7M6 6.1v5.9" fill="none" stroke="#1a3a5a" stroke-width="0.8"/></svg>
<span class="a t" style="left:73px;top:753.44px;font-size:12.5px;color:#c8c8c8;letter-spacing:0.012px;">PlayerArmature</span>
<div class="a " style="left:264px;top:752.3px;width:19.5px;height:15.5px;background:#2c2c2c;border-radius:0 3px 3px 0;"></div>
<svg class="a" style="left:268px;top:754.5px;" width="12" height="12" viewBox="0 0 12 12"><circle cx="6" cy="6" r="4.5" fill="none" stroke="#c0c0c0" stroke-width="1.1"/><circle cx="6" cy="6" r="1.7" fill="#c0c0c0"/></svg>
<div class="a " style="left:315px;top:408px;width:16px;height:362px;background:#2a2a2a;"></div>
<div class="a " style="left:314.5px;top:608px;width:0.8px;height:162px;background:#1e1e1e;"></div>
<svg class="a" style="left:318.5px;top:413px;" width="9" height="6" viewBox="0 0 9 6"><path d="M4.5 0.5l4 4.5h-8z" fill="#c0c0c0"/></svg>
<div class="a " style="left:318.2px;top:423.5px;width:9.8px;height:295px;background:#4a4a4a;border-radius:5px;"></div>
<svg class="a" style="left:318.5px;top:756.5px;" width="9" height="6" viewBox="0 0 9 6"><path d="M4.5 5.5l4-4.5h-8z" fill="#c0c0c0"/></svg>
<div class="a " style="left:331px;top:408px;width:829px;height:360px;background:#1b1b1b;"></div>
<svg class="a" style="left:331px;top:408px;" width="829" height="360" viewBox="331 408 829 360"><path d="M329.8 408V768M341.8 408V768M353.8 408V768M365.8 408V768M377.8 408V768M389.8 408V768M401.8 408V768M413.8 408V768M425.8 408V768M437.8 408V768M449.8 408V768M461.8 408V768M473.8 408V768M485.8 408V768M497.8 408V768M509.8 408V768M521.8 408V768M533.8 408V768M545.8 408V768M557.8 408V768M569.8 408V768M581.8 408V768M593.8 408V768M605.8 408V768M617.8 408V768M629.8 408V768M641.8 408V768M653.8 408V768M665.8 408V768M677.8 408V768M689.8 408V768M701.8 408V768M713.8 408V768M725.8 408V768M737.8 408V768M749.8 408V768M761.8 408V768M773.8 408V768M785.8 408V768M797.8 408V768M809.8 408V768M821.8 408V768M833.8 408V768M845.8 408V768M857.8 408V768M869.8 408V768M881.8 408V768M893.8 408V768M905.8 408V768M917.8 408V768M929.8 408V768M941.8 408V768M953.8 408V768M965.8 408V768M977.8 408V768M989.8 408V768M1001.8 408V768M1013.8 408V768M1025.8 408V768M1037.8 408V768M1049.8 408V768M1061.8 408V768M1073.8 408V768M1085.8 408V768M1097.8 408V768M1109.8 408V768M1121.8 408V768M1133.8 408V768M1145.8 408V768M1157.8 408V768M331 411.7H1160M331 423.7H1160M331 435.7H1160M331 447.7H1160M331 459.7H1160M331 471.7H1160M331 483.7H1160M331 495.7H1160M331 507.7H1160M331 519.7H1160M331 531.7H1160M331 543.7H1160M331 555.7H1160M331 567.7H1160M331 579.7H1160M331 591.7H1160M331 603.7H1160M331 615.7H1160M331 627.7H1160M331 639.7H1160M331 651.7H1160M331 663.7H1160M331 675.7H1160M331 687.7H1160M331 699.7H1160M331 711.7H1160M331 723.7H1160M331 735.7H1160M331 747.7H1160M331 759.7H1160" fill="none" stroke="#171717" stroke-width="1"/></svg>
<div class="a " style="left:0px;top:768px;width:1160px;height:2px;background:#111111;"></div>
<div class="a " style="left:351px;top:420.5px;width:85px;height:88.5px;background:#121212;border-radius:3px;"></div>
<div class="a " style="left:352px;top:421px;width:83px;height:7px;background:#8cc454;border-radius:2px 2px 0 0;"></div>
<div class="a " style="left:352px;top:428px;width:83px;height:38px;background:#3c3c3c;"></div>
<div class="a " style="left:352px;top:467px;width:83px;height:29px;background:#3b3b3b;"></div>
<div class="a " style="left:352px;top:497px;width:83px;height:11px;background:#3e3e3d;border-radius:0 0 2px 2px;"></div>
<svg class="a" style="left:361px;top:436px;" width="27" height="23" viewBox="0 0 27 23"><path d="M2.2 12.5l7.5 7.5 14.5-15" fill="none" stroke="#a4f048" stroke-width="5"/></svg>
<span class="a t" style="left:395.6px;top:431.14px;font-size:12.5px;color:#d0d0d0;letter-spacing:0.021px;">Start</span>
<span class="a t" style="left:395.6px;top:446.73px;font-size:11px;color:#d0d0d0;letter-spacing:-0.325px;">Event</span>
<svg class="a" style="left:415px;top:474px;" width="15" height="12" viewBox="0 0 15 12"><path d="M0.5 4.5h8v-3.8l6 5.3-6 5.3v-3.8h-8z" fill="#a4f048"/></svg>
<svg class="a" style="left:439.5px;top:474.8px;" width="11" height="14" viewBox="0 0 11 14"><path d="M1 1.2l8.5 5.8-8.5 5.8z" fill="none" stroke="#8a8a8a" stroke-width="1.2"/></svg>
<div class="a " style="left:350px;top:522.5px;width:99px;height:88.5px;background:#121212;border-radius:3px;"></div>
<div class="a " style="left:351px;top:523px;width:97px;height:7px;background:#8cc454;border-radius:2px 2px 0 0;"></div>
<div class="a " style="left:351px;top:530px;width:97px;height:38px;background:#3c3c3c;"></div>
<div class="a " style="left:351px;top:569px;width:97px;height:29px;background:#3b3b3b;"></div>
<div class="a " style="left:351px;top:599px;width:97px;height:11px;background:#3e3e3d;border-radius:0 0 2px 2px;"></div>
<svg class="a" style="left:357px;top:533px;" width="30" height="30" viewBox="0 0 30 30"><path d="M11 21.5h-4.5a4 4 0 0 1-4-4v-11a4 4 0 0 1 4-4h17a4 4 0 0 1 4 4v11a4 4 0 0 1-4 4h-3.5" fill="none" stroke="#a4f048" stroke-width="2.8"/><path d="M9.5 14l7.5 7.5-7.5 7.5z" fill="#a4f048"/></svg>
<span class="a t" style="left:394.6px;top:533.34px;font-size:12.5px;color:#d0d0d0;letter-spacing:-0.101px;">Update</span>
<span class="a t" style="left:394.6px;top:549.13px;font-size:11px;color:#d0d0d0;letter-spacing:-0.325px;">Event</span>
<svg class="a" style="left:428px;top:576px;" width="15" height="12" viewBox="0 0 15 12"><path d="M0.5 4.5h8v-3.8l6 5.3-6 5.3v-3.8h-8z" fill="#a4f048"/></svg>
<svg class="a" style="left:453px;top:577px;" width="11" height="14" viewBox="0 0 11 14"><path d="M1 1.2l8.5 5.8-8.5 5.8z" fill="none" stroke="#8a8a8a" stroke-width="1.2"/></svg>
<div class="a " style="left:543px;top:413.5px;width:121px;height:109.5px;background:#121212;border-radius:3px;"></div>
<div class="a " style="left:544px;top:414px;width:119px;height:45px;background:#3c3c3c;border-radius:2px 2px 0 0;"></div>
<div class="a " style="left:544px;top:460px;width:119px;height:50px;background:#3b3b3b;"></div>
<div class="a " style="left:544px;top:511px;width:119px;height:11px;background:#3e3e3d;border-radius:0 0 2px 2px;"></div>
<svg class="a" style="left:551px;top:430px;" width="29" height="17" viewBox="0 0 29 17"><rect x="0.5" y="0.5" width="28" height="14.5" rx="7" fill="#e4ecf4"/><path d="M2 9a6 6 0 0 0 9 5.5h7a6 6 0 0 0 9-5.5z" fill="#e4ecf4"/><path d="M7.5 4.5v6M4.5 7.5h6" stroke="#222" stroke-width="1.5"/><circle cx="19" cy="9.5" r="1.7" fill="#222"/><circle cx="23" cy="5.5" r="1.7" fill="#222"/></svg>
<span class="a t" style="left:587.5px;top:421.32px;font-size:10.5px;color:#d0d0d0;letter-spacing:0.03px;">Input</span>
<span class="a t" style="left:587.5px;top:438.44px;font-size:12.5px;color:#d0d0d0;letter-spacing:-0.165px;">Get Key</span>
<svg class="a" style="left:527.5px;top:468px;" width="11" height="14" viewBox="0 0 11 14"><path d="M1 1.2l8.5 5.8-8.5 5.8z" fill="none" stroke="#8a8a8a" stroke-width="1.2"/></svg>
<svg class="a" style="left:550px;top:467.3px;" width="15" height="12" viewBox="0 0 15 12"><path d="M0.5 4.5h8v-3.8l6 5.3-6 5.3v-3.8h-8z" fill="#a4f048"/></svg>
<svg class="a" style="left:643px;top:467.3px;" width="15" height="12" viewBox="0 0 15 12"><path d="M0.5 4.5h8v-3.8l6 5.3-6 5.3v-3.8h-8z" fill="#a4f048"/></svg>
<svg class="a" style="left:528.4px;top:490.3px;" width="12" height="12" viewBox="0 0 12 12"><circle cx="6" cy="6" r="4" fill="none" stroke="#8a8a8a" stroke-width="1.4"/></svg>
<svg class="a" style="left:549.7px;top:489.8px;" width="12" height="12" viewBox="0 0 12 12"><circle cx="6" cy="6" r="3.5" fill="#c8c8c8"/></svg>
<span class="a t" style="left:570.5px;top:488.94px;font-size:12.5px;color:#d0d0d0;letter-spacing:-0.013px;">Key</span>
<div class="a " style="left:598px;top:487.5px;width:35.5px;height:17px;background:#484848;border:1px solid #242424;border-radius:3px;"></div>
<span class="a t" style="left:601.5px;top:488.24px;font-size:12.5px;color:#d0d0d0;letter-spacing:-1.043px;">F1</span>
<svg class="a" style="left:620px;top:493px;" width="9" height="6" viewBox="0 0 9 6"><path d="M0.3 0.8h7.4L4 5.2z" fill="#c8c8c8"/></svg>
<svg class="a" style="left:642.7px;top:489.8px;" width="12" height="12" viewBox="0 0 12 12"><circle cx="6" cy="6" r="3.8" fill="#8cbcf8"/></svg>
<svg class="a" style="left:666px;top:466px;" width="42" height="38" viewBox="0 0 42 38"><path d="M8 9h28" stroke="#dcdcdc" stroke-width="1.6"/><path d="M2 2.5l9 6.5-9 6.5z" fill="#dce4e4"/><path d="M29 2.5l9 6.5-9 6.5z" fill="#dce4e4"/><path d="M6.5 30h28" stroke="#b8b8b8" stroke-width="1.6"/><circle cx="6.5" cy="30" r="4.5" fill="#b0b0b0"/><circle cx="34.5" cy="30" r="4.5" fill="#b0b0b0"/></svg>
<div class="a " style="left:708px;top:413.5px;width:87px;height:109.5px;background:#121212;border-radius:3px;"></div>
<div class="a " style="left:709px;top:414px;width:85px;height:45px;background:#3c3c3c;border-radius:2px 2px 0 0;"></div>
<div class="a " style="left:709px;top:460px;width:85px;height:50px;background:#3b3b3b;"></div>
<div class="a " style="left:709px;top:511px;width:85px;height:11px;background:#3e3e3d;border-radius:0 0 2px 2px;"></div>
<svg class="a" style="left:715px;top:423px;" width="30" height="32" viewBox="0 0 30 32"><path d="M1 16h6c6 0 7-10 15-10M7 16c6 0 7 10 15 10" fill="none" stroke="#a4f048" stroke-width="3.8"/><path d="M20 0.5l9 5.8-9 5.8zM20 20l9 5.8-9 5.8z" fill="#a4f048"/></svg>
<span class="a t" style="left:752px;top:431.14px;font-size:12.5px;color:#d0d0d0;">If</span>
<svg class="a" style="left:715px;top:467.3px;" width="15" height="12" viewBox="0 0 15 12"><path d="M0.5 4.5h8v-3.8l6 5.3-6 5.3v-3.8h-8z" fill="#a4f048"/></svg>
<span class="a t" style="left:742.6px;top:467.74px;font-size:12.5px;color:#d0d0d0;letter-spacing:-0.009px;">True</span>
<svg class="a" style="left:774px;top:467.3px;" width="15" height="12" viewBox="0 0 15 12"><path d="M0.5 4.5h8v-3.8l6 5.3-6 5.3v-3.8h-8z" fill="#a4f048"/></svg>
<svg class="a" style="left:798.5px;top:468.5px;" width="11" height="14" viewBox="0 0 11 14"><path d="M1 1.2l8.5 5.8-8.5 5.8z" fill="none" stroke="#8a8a8a" stroke-width="1.2"/></svg>
<svg class="a" style="left:714.8px;top:489.8px;" width="12" height="12" viewBox="0 0 12 12"><circle cx="6" cy="6" r="3.8" fill="#8cbcf8"/></svg>
<span class="a t" style="left:738.3px;top:489.04px;font-size:12.5px;color:#d0d0d0;letter-spacing:-0.213px;">False</span>
<svg class="a" style="left:774px;top:488.3px;" width="15" height="12" viewBox="0 0 15 12"><path d="M0.5 4.5h8v-3.8l6 5.3-6 5.3v-3.8h-8z" fill="#a4f048"/></svg>
<svg class="a" style="left:798.5px;top:489.3px;" width="11" height="14" viewBox="0 0 11 14"><path d="M1 1.2l8.5 5.8-8.5 5.8z" fill="none" stroke="#8a8a8a" stroke-width="1.2"/></svg>
<div class="a " style="left:509px;top:541.5px;width:156px;height:93.5px;background:#121212;border-radius:3px;"></div>
<div class="a " style="left:510px;top:542px;width:154px;height:7px;background:#237382;border-radius:2px 2px 0 0;"></div>
<div class="a " style="left:510px;top:549px;width:154px;height:43px;background:#3c3c3c;"></div>
<div class="a " style="left:510px;top:593px;width:154px;height:29px;background:#3b3b3b;"></div>
<div class="a " style="left:510px;top:623px;width:154px;height:11px;background:#3e3e3d;border-radius:0 0 2px 2px;"></div>
<svg class="a" style="left:515px;top:552px;" width="33" height="31" viewBox="0 0 33 31"><path d="M11 1.5L3 10l8 8.5M20.5 1.5l8.5 8.5-4 4.5" fill="none" stroke="#5aa8ec" stroke-width="4.2"/><circle cx="23" cy="21.5" r="8" fill="#3a8ee0"/><path d="M18 18.5l3.5-3.5 4 0.5-1.5 3 2 2.5-2 4.5-3-0.5-0.5-3.5z" fill="#a4dc3c"/><path d="M27 17l2.5 3-1 4z" fill="#7cc8e8"/><circle cx="23" cy="21.5" r="8" fill="none" stroke="#2a6ab0" stroke-width="0.8"/></svg>
<span class="a t" style="left:553.6px;top:551.34px;font-size:12.5px;color:#d0d0d0;letter-spacing:-0.046px;">Get Variable</span>
<div class="a " style="left:553.5px;top:568.3px;width:55.700000000000045px;height:16.90000000000009px;background:#484848;border:1px solid #242424;border-radius:3px;"></div>
<span class="a t" style="left:557.5px;top:568.99px;font-size:12.5px;color:#d0d0d0;letter-spacing:-0.088px;">Scene</span>
<svg class="a" style="left:596px;top:574px;" width="9" height="6" viewBox="0 0 9 6"><path d="M0.3 0.8h7.4L4 5.2z" fill="#c8c8c8"/></svg>
<svg class="a" style="left:494.4px;top:601.8px;" width="12" height="12" viewBox="0 0 12 12"><circle cx="6" cy="6" r="4" fill="none" stroke="#8a8a8a" stroke-width="1.4"/></svg>
<svg class="a" style="left:515.7px;top:601.8px;" width="12" height="12" viewBox="0 0 12 12"><circle cx="6" cy="6" r="3.5" fill="#d8a050"/></svg>
<div class="a " style="left:536px;top:599px;width:80.60000000000002px;height:17.799999999999955px;background:#232323;border:1px solid #151515;border-radius:3px;border-radius:3px 0 0 3px;"></div>
<span class="a t" style="left:539.3px;top:600.34px;font-size:12.5px;color:#d0d0d0;letter-spacing:0.082px;">StarterPlayer</span>
<div class="a " style="left:616.6px;top:599px;width:18.2px;height:17.8px;background:#3a3a3a;border:1px solid #1a1a1a;border-left:none;border-radius:0 3px 3px 0;"></div>
<svg class="a" style="left:621.5px;top:605px;" width="9" height="6" viewBox="0 0 9 6"><path d="M0.3 0.8h7.4L4 5.2z" fill="#c8c8c8"/></svg>
<svg class="a" style="left:643.4px;top:601.8px;" width="12" height="12" viewBox="0 0 12 12"><circle cx="6" cy="6" r="3.7" fill="#c8ccd4"/></svg>
<svg class="a" style="left:667px;top:601px;" width="34" height="14" viewBox="0 0 34 14"><path d="M6.5 7h20" stroke="#7cc048" stroke-width="1.6"/><circle cx="6.5" cy="7" r="4.5" fill="#6eae40"/><circle cx="26.6" cy="7" r="4.5" fill="#6eae40"/></svg>
<div class="a " style="left:702px;top:541.5px;width:229px;height:114.5px;background:#121212;border-radius:3px;"></div>
<div class="a " style="left:703px;top:542px;width:227px;height:7px;background:#8cc454;border-radius:2px 2px 0 0;"></div>
<div class="a " style="left:703px;top:549px;width:227px;height:43px;background:#3c3c3c;"></div>
<div class="a " style="left:703px;top:593px;width:227px;height:50px;background:#3b3b3b;"></div>
<div class="a " style="left:703px;top:644px;width:227px;height:11px;background:#3e3e3d;border-radius:0 0 2px 2px;"></div>
<svg class="a" style="left:712px;top:552px;" width="22" height="29" viewBox="0 0 22 29"><path d="M11.5 0.5L1.5 15h7.5l-2 13L20 10.5h-8z" fill="#bef048"/></svg>
<span class="a t" style="left:746.4px;top:551.34px;font-size:12.5px;color:#d0d0d0;letter-spacing:-0.058px;">On Input System Event Button</span>
<div class="a " style="left:746.3px;top:568.3px;width:84.10000000000002px;height:16.90000000000009px;background:#484848;border:1px solid #242424;border-radius:3px;"></div>
<span class="a t" style="left:750.3px;top:568.99px;font-size:12.5px;color:#d0d0d0;letter-spacing:-0.2px;">On Pressed</span>
<svg class="a" style="left:817.7px;top:574px;" width="9" height="6" viewBox="0 0 9 6"><path d="M0.3 0.8h7.4L4 5.2z" fill="#c8c8c8"/></svg>
<svg class="a" style="left:709px;top:599.5px;" width="14" height="14" viewBox="0 0 14 14"><circle cx="7" cy="7" r="6.2" fill="#e8ecf4"/><path d="M8 2.5L4.5 7.5h2.5l-1 4 3.5-5h-2.5z" fill="#3a8ee8"/></svg>
<svg class="a" style="left:910px;top:600.2px;" width="15" height="12" viewBox="0 0 15 12"><path d="M0.5 4.5h8v-3.8l6 5.3-6 5.3v-3.8h-8z" fill="#a4f048"/></svg>
<svg class="a" style="left:687.7px;top:622.8px;" width="12" height="12" viewBox="0 0 12 12"><circle cx="6" cy="6" r="4" fill="none" stroke="#8a8a8a" stroke-width="1.4"/></svg>
<svg class="a" style="left:707px;top:619px;" width="19" height="17" viewBox="0 0 19 17"><path d="M1.5 5.5l5-4 5.5 3.5-1.5 2.5 6 3v3.5l-5 2-4.5-3v-3.5L4.5 8z" fill="none" stroke="#f0f0f0" stroke-width="1.3"/><path d="M9.5 8.5v3h3" fill="none" stroke="#f0f0f0" stroke-width="1.2"/></svg>
<span class="a t" style="left:729.3px;top:621.94px;font-size:12.5px;color:#d0d0d0;letter-spacing:0.056px;">Input Action</span>
<div class="a " style="left:802px;top:621px;width:98.20000000000005px;height:16.600000000000023px;background:#484848;border:1px solid #242424;border-radius:3px;"></div>
<span class="a t" style="left:805.7px;top:621.54px;font-size:12.5px;color:#d0d0d0;letter-spacing:0.127px;">Select</span>
<svg class="a" style="left:887.3px;top:626.3px;" width="9" height="6" viewBox="0 0 9 6"><path d="M0.3 0.8h7.4L4 5.2z" fill="#c8c8c8"/></svg>
<svg class="a" style="left:932px;top:600px;" width="66" height="16" viewBox="0 0 66 16"><path d="M8 8h50" stroke="#dcdcdc" stroke-width="1.6"/><path d="M2.5 1.5l9 6.5-9 6.5z" fill="#dce4e4"/><path d="M55 1.5l9 6.5-9 6.5z" fill="#dce4e4"/></svg>
<div class="a " style="left:1000px;top:546.5px;width:132px;height:172.5px;background:#121212;border-radius:3px;"></div>
<div class="a " style="left:1001px;top:547px;width:130px;height:45px;background:#3c3c3c;border-radius:2px 2px 0 0;"></div>
<div class="a " style="left:1001px;top:593px;width:130px;height:113px;background:#3b3b3b;"></div>
<div class="a " style="left:1001px;top:707px;width:130px;height:11px;background:#3e3e3d;border-radius:0 0 2px 2px;"></div>
<svg class="a" style="left:1009.5px;top:559.5px;" width="26" height="24" viewBox="0 0 26 24"><path d="M12.5 3v7" stroke="#a4f048" stroke-width="5.2" stroke-linecap="round"/><path d="M8 17l-4.5 2.6" stroke="#7ab8f8" stroke-width="5.2" stroke-linecap="round"/><path d="M17 17l4.5 2.6" stroke="#d87c2a" stroke-width="5.2" stroke-linecap="round"/></svg>
<span class="a t" style="left:1044.6px;top:555.33px;font-size:11px;color:#d0d0d0;letter-spacing:-0.112px;">Transform</span>
<span class="a t" style="left:1044.6px;top:571.14px;font-size:12.5px;color:#d0d0d0;letter-spacing:-0.138px;">Rotate</span>
<svg class="a" style="left:1007px;top:600.2px;" width="15" height="12" viewBox="0 0 15 12"><path d="M0.5 4.5h8v-3.8l6 5.3-6 5.3v-3.8h-8z" fill="#a4f048"/></svg>
<svg class="a" style="left:1111px;top:600.2px;" width="15" height="12" viewBox="0 0 15 12"><path d="M0.5 4.5h8v-3.8l6 5.3-6 5.3v-3.8h-8z" fill="#a4f048"/></svg>
<svg class="a" style="left:1135.5px;top:601px;" width="11" height="14" viewBox="0 0 11 14"><path d="M1 1.2l8.5 5.8-8.5 5.8z" fill="none" stroke="#8a8a8a" stroke-width="1.2"/></svg>
<svg class="a" style="left:985.5px;top:622.7px;" width="12" height="12" viewBox="0 0 12 12"><circle cx="6" cy="6" r="4" fill="none" stroke="#8a8a8a" stroke-width="1.4"/></svg>
<svg class="a" style="left:1007.5px;top:621px;" width="13.5" height="12.5" viewBox="0 0 26 24"><path d="M12.5 3v7" stroke="#a4f048" stroke-width="5.2" stroke-linecap="round"/><path d="M8 17l-4.5 2.6" stroke="#7ab8f8" stroke-width="5.2" stroke-linecap="round"/><path d="M17 17l4.5 2.6" stroke="#d87c2a" stroke-width="5.2" stroke-linecap="round"/></svg>
<div class="a " style="left:1027.4px;top:620.4px;width:74.39999999999986px;height:16.899999999999977px;background:#232323;border:1px solid #151515;border-radius:3px;"></div>
<span class="a t" style="left:1031.2px;top:621.29px;font-size:12.5px;color:#d0d0d0;letter-spacing:-0.103px;">This</span>
<div class="a " style="left:1083px;top:621.4px;width:17.8px;height:14.9px;background:#2c2c2c;border-radius:0 3px 3px 0;"></div>
<svg class="a" style="left:1086.2px;top:623px;" width="12" height="12" viewBox="0 0 12 12"><circle cx="6" cy="6" r="4.5" fill="none" stroke="#c8c8c8" stroke-width="1.1"/><circle cx="6" cy="6" r="1.7" fill="#c8c8c8"/></svg>
<svg class="a" style="left:985.5px;top:644px;" width="12" height="12" viewBox="0 0 12 12"><circle cx="6" cy="6" r="4" fill="none" stroke="#8a8a8a" stroke-width="1.4"/></svg>
<svg class="a" style="left:1006.8px;top:644px;" width="12" height="12" viewBox="0 0 12 12"><circle cx="6" cy="6" r="3.8" fill="#8cbcf8"/></svg>
<span class="a t" style="left:1027.4px;top:643.14px;font-size:12.5px;color:#d0d0d0;letter-spacing:-0.084px;">X Angle</span>
<div class="a " style="left:1075.4px;top:641.4px;width:15.599999999999909px;height:17.100000000000023px;background:#232323;border:1px solid #151515;border-radius:3px;"></div>
<span class="a t" style="left:1079.5px;top:642.39px;font-size:12.5px;color:#d0d0d0;">0</span>
<svg class="a" style="left:985.5px;top:665.2px;" width="12" height="12" viewBox="0 0 12 12"><circle cx="6" cy="6" r="4" fill="none" stroke="#8a8a8a" stroke-width="1.4"/></svg>
<svg class="a" style="left:1006.8px;top:665.2px;" width="12" height="12" viewBox="0 0 12 12"><circle cx="6" cy="6" r="3.8" fill="#8cbcf8"/></svg>
<span class="a t" style="left:1027.4px;top:664.34px;font-size:12.5px;color:#d0d0d0;letter-spacing:-0.052px;">Y Angle</span>
<div class="a " style="left:1075.4px;top:662.6px;width:15.599999999999909px;height:17.100000000000023px;background:#232323;border:1px solid #151515;border-radius:3px;"></div>
<span class="a t" style="left:1079.5px;top:663.59px;font-size:12.5px;color:#d0d0d0;">0</span>
<svg class="a" style="left:1006.8px;top:686px;" width="12" height="12" viewBox="0 0 12 12"><circle cx="6" cy="6" r="3.8" fill="#8cbcf8"/></svg>
<span class="a t" style="left:1027.4px;top:685.14px;font-size:12.5px;color:#d0d0d0;letter-spacing:0.016px;">Z Angle</span>
<div class="a " style="left:846px;top:662.5px;width:83px;height:91.5px;background:#121212;border-radius:3px;"></div>
<div class="a " style="left:847px;top:663px;width:81px;height:48px;background:#3c3c3c;border-radius:2px 2px 0 0;"></div>
<div class="a " style="left:847px;top:712px;width:81px;height:29px;background:#3b3b3b;"></div>
<div class="a " style="left:847px;top:742px;width:81px;height:11px;background:#3e3e3d;border-radius:0 0 2px 2px;"></div>
<svg class="a" style="left:854px;top:679px;" width="24" height="24" viewBox="0 0 24 24"><circle cx="12" cy="12" r="10" fill="#80b8f8" stroke="#a09890" stroke-width="0.8"/></svg>
<span class="a t" style="left:890.3px;top:672.34px;font-size:12.5px;color:#d0d0d0;letter-spacing:0.043px;">Float</span>
<div class="a " style="left:890.2px;top:689.3px;width:22.799999999999955px;height:17.200000000000045px;background:#232323;border:1px solid #151515;border-radius:3px;"></div>
<span class="a t" style="left:893.7px;top:690.34px;font-size:12.5px;color:#d0d0d0;letter-spacing:0.399px;">30</span>
<svg class="a" style="left:907.9px;top:720.9px;" width="12" height="12" viewBox="0 0 12 12"><circle cx="6" cy="6" r="3.8" fill="#8cbcf8"/></svg>
<svg class="a" style="left:930px;top:684px;" width="70" height="50" viewBox="0 0 70 50"><path d="M7.6 43C32 43 36 8 61.5 8" fill="none" stroke="#5a9cd8" stroke-width="1.7"/><circle cx="7.6" cy="43" r="4.6" fill="#5496d2"/><circle cx="61.5" cy="8" r="4.6" fill="#5a9cd8"/></svg>
<svg class="a" style="left:985px;top:552px;" width="14" height="21" viewBox="0 0 14 21"><path d="M1 1v16l4-3.8 2.6 6 2.3-1-2.6-5.8h5.5z" fill="#ffffff" stroke="#111" stroke-width="1"/></svg>
</div>
</body></html>
